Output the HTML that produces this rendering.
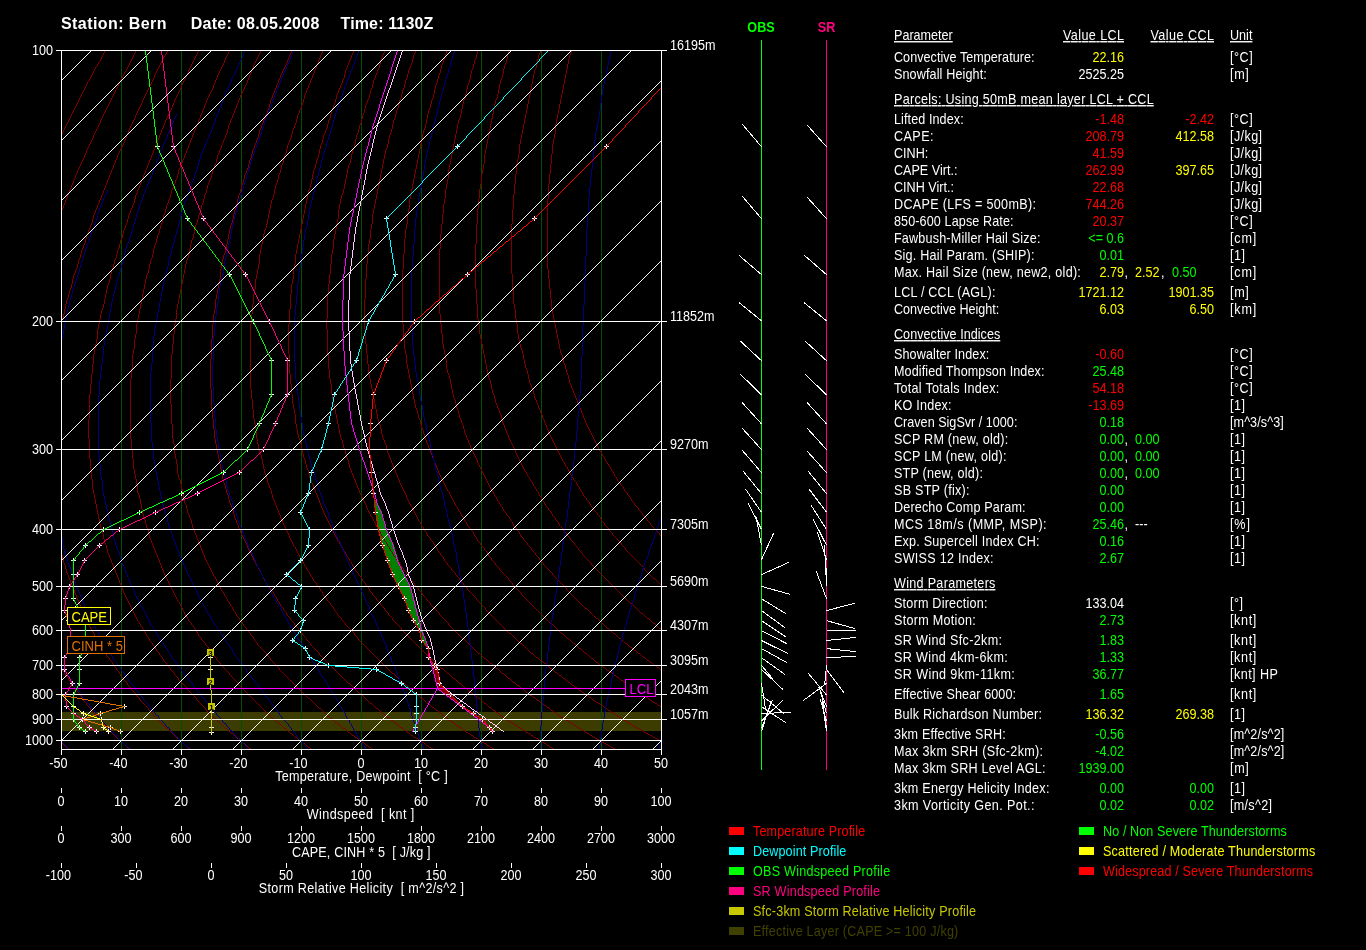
<!DOCTYPE html><html><head><meta charset="utf-8"><title>Sounding Bern 08.05.2008 1130Z</title>
<style>html,body{margin:0;padding:0;background:#000;overflow:hidden}svg{display:block;will-change:transform}text{font-family:"Liberation Sans",Arial,sans-serif;white-space:pre}</style></head><body>
<svg width="1366" height="950" viewBox="0 0 1366 950">
<defs><clipPath id="c"><rect x="62" y="51" width="599" height="698"/></clipPath></defs>
<rect width="1366" height="950" fill="#000"/>
<g shape-rendering="crispEdges" fill="none">
<g clip-path="url(#c)">
<rect x="62" y="712" width="599" height="19" fill="#3c3c00"/>
<polygon points="374.4,500.0 374.6,502.0 374.8,504.0 375.0,506.0 375.2,508.0 375.4,510.0 375.6,512.0 375.9,514.0 376.3,516.0 376.6,518.0 377.0,520.0 377.3,522.0 377.7,524.0 378.0,526.0 378.3,528.0 378.7,530.0 379.2,532.0 379.6,534.0 380.1,536.0 380.5,538.0 381.0,540.0 381.4,542.0 381.9,544.0 382.4,546.0 383.1,548.0 383.8,550.0 384.5,552.0 385.2,554.0 386.0,556.0 386.7,558.0 387.4,560.0 388.1,562.0 388.8,564.0 389.5,566.0 390.2,568.0 390.9,570.0 391.6,572.0 392.4,574.0 393.3,576.0 394.3,578.0 395.3,580.0 396.4,582.0 397.4,584.0 398.4,586.0 399.4,588.0 400.4,590.0 401.4,592.0 402.4,594.0 403.4,596.0 404.4,598.0 405.1,600.0 405.8,602.0 406.4,604.0 407.1,606.0 407.7,608.0 408.4,610.0 409.3,612.0 410.3,614.0 411.4,616.0 412.4,618.0 413.4,620.0 414.5,622.0 415.7,624.0 416.9,626.0 418.1,628.0 419.2,630.0 419.9,632.0 420.2,634.0 420.6,636.0 421.0,638.0 421.4,640.0 422.7,642.0 424.5,644.0 426.3,646.0 427.9,646.0 427.2,644.0 426.6,642.0 425.9,640.0 425.3,638.0 424.6,636.0 423.8,634.0 423.0,632.0 422.3,630.0 421.8,628.0 421.2,626.0 420.7,624.0 420.2,622.0 419.7,620.0 419.2,618.0 418.6,616.0 418.1,614.0 417.6,612.0 417.1,610.0 416.6,608.0 416.1,606.0 415.6,604.0 415.1,602.0 414.6,600.0 414.1,598.0 413.5,596.0 412.9,594.0 412.2,592.0 411.6,590.0 411.0,588.0 410.3,586.0 409.3,584.0 408.3,582.0 407.3,580.0 406.3,578.0 405.3,576.0 404.4,574.0 403.5,572.0 402.7,570.0 401.8,568.0 401.0,566.0 400.1,564.0 399.3,562.0 398.4,560.0 397.8,558.0 397.2,556.0 396.5,554.0 395.9,552.0 395.3,550.0 394.7,548.0 394.0,546.0 393.4,544.0 392.6,542.0 391.7,540.0 390.8,538.0 389.9,536.0 389.0,534.0 388.0,532.0 387.1,530.0 386.4,528.0 385.9,526.0 385.3,524.0 384.7,522.0 384.2,520.0 383.6,518.0 383.1,516.0 382.5,514.0 381.8,512.0 380.8,510.0 379.8,508.0 378.8,506.0 377.8,504.0 377.3,502.0 376.8,500.0" fill="#008000"/>
<polygon points="430.5,660.0 430.9,661.5 431.4,663.0 431.8,664.5 432.2,666.0 432.7,667.5 433.0,669.0 433.4,670.5 433.7,672.0 434.1,673.5 434.5,675.0 434.8,676.5 435.2,678.0 435.5,679.5 435.9,681.0 436.3,682.5 436.7,684.0 437.1,685.5 437.5,687.0 437.9,688.5 439.7,690.0 441.7,691.5 443.7,693.0 445.7,694.5 447.7,696.0 449.6,697.5 451.6,699.0 453.6,700.5 455.6,702.0 457.5,703.5 459.5,705.0 461.5,706.5 463.5,708.0 465.5,709.5 467.4,711.0 469.4,712.5 471.4,714.0 473.4,715.5 475.3,717.0 477.3,718.5 479.3,720.0 481.3,721.5 483.3,723.0 485.2,724.5 487.2,726.0 489.2,727.5 491.2,729.0 493.1,730.5 491.7,730.5 490.5,729.0 489.3,727.5 488.1,726.0 486.8,724.5 485.5,723.0 484.2,721.5 482.9,720.0 480.9,718.5 478.7,717.0 476.4,715.5 474.1,714.0 471.8,712.5 469.6,711.0 467.3,709.5 465.0,708.0 462.8,706.5 461.1,705.0 459.5,703.5 457.9,702.0 456.4,700.5 454.8,699.0 453.2,697.5 451.6,696.0 450.0,694.5 448.5,693.0 447.1,691.5 445.6,690.0 444.2,688.5 442.7,687.0 441.2,685.5 439.8,684.0 439.2,682.5 439.0,681.0 438.8,679.5 438.6,678.0 438.4,676.5 438.2,675.0 438.0,673.5 437.8,672.0 437.6,670.5 437.2,669.0 436.0,667.5 434.8,666.0 433.6,664.5 432.4,663.0 431.2,661.5 430.0,660.0" fill="#800000"/>
<line x1="121.5" y1="51.0" x2="121.5" y2="749.0" stroke="#005000" stroke-width="1" />
<line x1="181.5" y1="51.0" x2="181.5" y2="749.0" stroke="#005000" stroke-width="1" />
<line x1="241.5" y1="51.0" x2="241.5" y2="749.0" stroke="#005000" stroke-width="1" />
<line x1="301.5" y1="51.0" x2="301.5" y2="749.0" stroke="#005000" stroke-width="1" />
<line x1="361.5" y1="51.0" x2="361.5" y2="749.0" stroke="#005000" stroke-width="1" />
<line x1="421.5" y1="51.0" x2="421.5" y2="749.0" stroke="#005000" stroke-width="1" />
<line x1="481.5" y1="51.0" x2="481.5" y2="749.0" stroke="#005000" stroke-width="1" />
<line x1="541.5" y1="51.0" x2="541.5" y2="749.0" stroke="#005000" stroke-width="1" />
<line x1="601.5" y1="51.0" x2="601.5" y2="749.0" stroke="#005000" stroke-width="1" />
<path d="M104.5 51v2m-1 0v2m-1 0v2m-1 0v2m-1 0v2m-1 0v1m-1 0v2m-1 0v2m-1 0v1m-1 0v2m-1 0v2m-1 0v2m-1 0v2m-1 0v2m-1 0v2m-1 0v2m-1 0v1m-1 0v2m-1 0v2m-1 0v2m-1 0v2m-1 0v2m-1 0v2m-1 0v2m-1 0v2m-1 0v2m-1 0v2m-1 0v2m-1 0v2m-1 0v2m-1 0v2m-1 0v2m-1 0v2m-1 0v2m-1 0v2m-1 0v2m-1 0v2m-1 0v2m-1 0v2m-1 0v2m-1 0v2m-1 0v2m-1 0v2m0 609v1m1 0v1m1 0v1m1 0v1m1 0v1m0.5 0.5h2" stroke="#800000"/>
<path d="M135.5 51v2m-1 0v2m-1 0v2m-1 0v2m-1 0v2m-1 0v2m-1 0v2m-1 0v2m-1 0v2m-1 0v2m-1 0v1m-1 0v2m-1 0v2m-1 0v2m-1 0v2m-1 0v2m-1 0v2m-1 0v2m-1 0v2m-1 0v2m-1 0v2m-1 0v2m-1 0v2m-1 0v2m-1 0v2m-1 0v2m-1 0v2m-1 0v2m-1 0v2m-1 0v2m-1 0v2m-1 0v2m-1 0v2m-1 0v2m-1 0v2m-1 0v3m-1 0v2m-1 0v2m-1 0v2m-1 0v2m-1 0v2m-1 0v2m-1 0v3m-1 0v2m-1 0v2m-1 0v2m-1 0v2m-1 0v2m-1 0v2m-1 0v3m-1 0v2m-1 0v3m-1 0v2m-1 0v2m-1 0v2m-1 0v2m-1 0v2m-1 0v2m-1 0v3m-1 0v2m-1 0v3m-1 0v2m-1 0v3m-1 0v2m-1 0v3m-1 0v2m-1 0v3m-1 0v2m-1 0v3m-1 0v2m-1 0v3m-1 0v2m-1 0v3m-1 0v2m0 459v2m1 0v1m1 0v2m1 0v2m1 0v1m1 0v1m1 0v2m1 0v1m1 0v1m1 0v2m1 0v2m1 0v1m1 0v1m1 0v2m1 0v1m1 0v1m1 0v1m1 0v2m1 0v1m1 0v1m1 0v2m1 0v2m1 0v1m1 0v1m1 0v2m1 0v1m1 0v1m1 0v1m1 0v2m1 0v1m1 0v1m1 0v1m1 0v1m1 0v1m1 0v1m1 0v1m1 0v1m1 0v2m1 0v1m1 0v1m1 0v1m1 0v1m1 0v1m1 0v1m1 0v1m1 0v1m1 0v2m1 0v1m1 0v1m1 0v1m1 0v1m1 0v1m1 0v1m1 0v1m1 0v1m0.5 0.5h2m0.5 0.5v1m1 0v1m1 0v1m1 0v1m1 0v1m1 0v1m1 0v1m1 0v1m1 0v1m0.5 0.5h2" stroke="#800000"/>
<path d="M167.5 51v1m-1 0v2m-1 0v2m-1 0v1m-1 0v2m-1 0v2m-1 0v2m-1 0v2m-1 0v2m-1 0v2m-1 0v2m-1 0v2m-1 0v2m-1 0v3m-1 0v2m-1 0v2m-1 0v2m-1 0v2m-1 0v2m-1 0v2m-1 0v2m-1 0v2m-1 0v2m-1 0v2m-1 0v2m-1 0v3m-1 0v2m-1 0v2m-1 0v2m-1 0v2m-1 0v2m-1 0v2m-1 0v3m-1 0v2m-1 0v2m-1 0v2m-1 0v2m-1 0v2m-1 0v2m-1 0v3m-1 0v2m-1 0v3m-1 0v2m-1 0v3m-1 0v2m-1 0v2m-1 0v2m-1 0v2m-1 0v2m-1 0v2m-1 0v3m-1 0v2m-1 0v3m-1 0v2m-1 0v3m-1 0v2m-1 0v3m-1 0v2m-1 0v3m-1 0v2m-1 0v3m-1 0v2m-1 0v3m-1 0v2m-1 0v3m-1 0v2m-1 0v3m-1 0v2m-1 0v3m-1 0v2m-1 0v3m-1 0v2m-1 0v3m-1 0v2m-1 0v4m-1 0v4m-1 0v2m-1 0v3m-1 0v2m-1 0v3m-1 0v2m-1 0v4m-1 0v4m-1 0v2m-1 0v3m-1 0v2m-1 0v4m-1 0v4m-1 0v2m-1 0v4m-1 0v4m-1 0v2m-1 0v3m-1 0v2m-1 0v4m-1 0v5m-1 0v4m-1 0v2m-1 0v4m-1 0v4m-1 0v2m-1 0v4m-1 0v5m-1 0v5m-1 0v4m-1 0v2m0 235v4m1 0v4m1 0v2m1 0v4m1 0v4m1 0v2m1 0v3m1 0v2m1 0v3m1 0v2m1 0v3m1 0v2m1 0v3m1 0v2m1 0v3m1 0v2m1 0v3m1 0v2m1 0v3m1 0v2m1 0v3m1 0v2m1 0v2m1 0v2m1 0v2m1 0v2m1 0v2m1 0v2m1 0v2m1 0v2m1 0v1m1 0v2m1 0v2m1 0v1m1 0v2m1 0v2m1 0v1m1 0v2m1 0v2m1 0v1m1 0v2m1 0v2m1 0v1m1 0v2m1 0v2m1 0v1m1 0v1m1 0v2m1 0v1m1 0v1m1 0v2m1 0v2m1 0v1m1 0v1m1 0v2m1 0v1m1 0v1m1 0v2m1 0v2m1 0v1m1 0v1m1 0v2m1 0v1m1 0v1m1 0v1m1 0v2m1 0v1m1 0v1m1 0v1m1 0v2m1 0v1m1 0v1m1 0v1m1 0v2m1 0v1m1 0v1m1 0v1m1 0v2m1 0v1m1 0v1m1 0v1m1 0v1m1 0v1m1 0v1m1 0v1m1 0v1m1 0v2m1 0v1m1 0v1m1 0v1m1 0v2m1 0v1m1 0v1m1 0v1m1 0v1m1 0v1m1 0v1m1 0v1m1 0v1m1 0v1m1 0v1m1 0v1m1 0v1m1 0v1m0.5 0.5h2m0.5 0.5v1m1 0v1m1 0v1m1 0v1m1 0v1m1 0v1m1 0v1m1 0v1m1 0v1m0.5 0.5h2m0.5 0.5v1m1 0v1m1 0v1m1 0v1m1 0v1m1 0v1m1 0v1m1 0v1m0.5 0.5h2m0.5 0.5v1" stroke="#800000"/>
<path d="M198.5 51v1m-1 0v2m-1 0v2m-1 0v2m-1 0v2m-1 0v2m-1 0v2m-1 0v2m-1 0v2m-1 0v2m-1 0v3m-1 0v2m-1 0v2m-1 0v2m-1 0v2m-1 0v2m-1 0v2m-1 0v3m-1 0v2m-1 0v2m-1 0v2m-1 0v2m-1 0v2m-1 0v2m-1 0v3m-1 0v2m-1 0v3m-1 0v2m-1 0v2m-1 0v2m-1 0v2m-1 0v2m-1 0v2m-1 0v3m-1 0v2m-1 0v3m-1 0v2m-1 0v3m-1 0v2m-1 0v3m-1 0v2m-1 0v3m-1 0v2m-1 0v3m-1 0v2m-1 0v3m-1 0v2m-1 0v3m-1 0v2m-1 0v3m-1 0v2m-1 0v3m-1 0v2m-1 0v3m-1 0v2m-1 0v3m-1 0v2m-1 0v3m-1 0v2m-1 0v3m-1 0v2m-1 0v3m-1 0v2m-1 0v4m-1 0v4m-1 0v2m-1 0v3m-1 0v2m-1 0v3m-1 0v2m-1 0v4m-1 0v4m-1 0v2m-1 0v3m-1 0v2m-1 0v4m-1 0v4m-1 0v2m-1 0v4m-1 0v4m-1 0v2m-1 0v4m-1 0v4m-1 0v2m-1 0v4m-1 0v4m-1 0v2m-1 0v4m-1 0v5m-1 0v4m-1 0v2m-1 0v4m-1 0v5m-1 0v5m-1 0v5m-1 0v4m-1 0v2m-1 0v4m-1 0v5m-1 0v5m-1 0v5m-1 0v10m-1 0v5m-1 0v5m-1 0v5m-1 0v10m-1 0v10m-1 0v10m-1 0v10m-1 0v25m-1 0v20m1 0v20m1 0v10m1 0v10m1 0v10m1 0v5m1 0v5m1 0v5m1 0v5m1 0v5m1 0v5m1 0v5m1 0v4m1 0v2m1 0v4m1 0v5m1 0v4m1 0v2m1 0v4m1 0v4m1 0v2m1 0v3m1 0v2m1 0v3m1 0v2m1 0v3m1 0v2m1 0v3m1 0v2m1 0v3m1 0v2m1 0v3m1 0v2m1 0v3m1 0v2m1 0v3m1 0v2m1 0v2m1 0v2m1 0v2m1 0v2m1 0v2m1 0v2m1 0v2m1 0v2m1 0v2m1 0v2m1 0v2m1 0v2m1 0v2m1 0v1m1 0v2m1 0v2m1 0v1m1 0v2m1 0v2m1 0v1m1 0v2m1 0v2m1 0v1m1 0v2m1 0v2m1 0v1m1 0v1m1 0v2m1 0v1m1 0v1m1 0v2m1 0v2m1 0v1m1 0v1m1 0v2m1 0v1m1 0v1m1 0v2m1 0v2m1 0v1m1 0v1m1 0v2m1 0v1m1 0v1m1 0v1m1 0v2m1 0v1m1 0v1m1 0v1m1 0v2m1 0v1m1 0v1m1 0v1m1 0v2m1 0v1m1 0v1m1 0v1m1 0v1m1 0v1m1 0v1m1 0v1m1 0v1m1 0v2m1 0v1m1 0v1m1 0v1m1 0v1m1 0v1m1 0v1m1 0v1m1 0v1m1 0v2m1 0v1m1 0v1m1 0v1m1 0v1m1 0v1m1 0v1m1 0v1m1 0v1m1 0v2m1 0v1m1 0v1m1 0v1m1 0v1m1 0v1m1 0v1m1 0v1m1 0v1m0.5 0.5h2m0.5 0.5v1m1 0v1m1 0v1m1 0v1m1 0v1m1 0v1m1 0v1m1 0v1m1 0v1m0.5 0.5h2m0.5 0.5v1m1 0v1m1 0v1m1 0v1m0.5 0.5h2m0.5 0.5v1m1 0v1m1 0v1m1 0v1m0.5 0.5h2m0.5 0.5v1m1 0v1m1 0v1m1 0v1m0.5 0.5h2m0.5 0.5v1m1 0v1m1 0v1m1 0v1m0.5 0.5h2" stroke="#800000"/>
<path d="M229.5 51v1m-1 0v2m-1 0v2m-1 0v2m-1 0v2m-1 0v3m-1 0v2m-1 0v2m-1 0v2m-1 0v2m-1 0v2m-1 0v2m-1 0v3m-1 0v2m-1 0v3m-1 0v2m-1 0v3m-1 0v2m-1 0v2m-1 0v2m-1 0v2m-1 0v2m-1 0v2m-1 0v3m-1 0v2m-1 0v3m-1 0v2m-1 0v3m-1 0v2m-1 0v3m-1 0v2m-1 0v3m-1 0v2m-1 0v3m-1 0v2m-1 0v3m-1 0v2m-1 0v3m-1 0v2m-1 0v3m-1 0v2m-1 0v3m-1 0v2m-1 0v3m-1 0v2m-1 0v3m-1 0v2m-1 0v3m-1 0v2m-1 0v3m-1 0v2m-1 0v4m-1 0v4m-1 0v2m-1 0v3m-1 0v2m-1 0v3m-1 0v2m-1 0v4m-1 0v4m-1 0v2m-1 0v3m-1 0v2m-1 0v4m-1 0v4m-1 0v2m-1 0v4m-1 0v4m-1 0v2m-1 0v4m-1 0v4m-1 0v2m-1 0v4m-1 0v4m-1 0v2m-1 0v4m-1 0v5m-1 0v4m-1 0v2m-1 0v4m-1 0v5m-1 0v4m-1 0v2m-1 0v4m-1 0v5m-1 0v5m-1 0v5m-1 0v5m-1 0v5m-1 0v5m-1 0v5m-1 0v5m-1 0v5m-1 0v10m-1 0v5m-1 0v10m-1 0v5m-1 0v15m-1 0v10m-1 0v60m1 0v10m1 0v10m1 0v10m1 0v5m1 0v5m1 0v5m1 0v9m1 0v2m1 0v4m1 0v5m1 0v5m1 0v5m1 0v4m1 0v2m1 0v4m1 0v4m1 0v2m1 0v4m1 0v4m1 0v2m1 0v3m1 0v2m1 0v3m1 0v2m1 0v3m1 0v2m1 0v3m1 0v2m1 0v3m1 0v2m1 0v3m1 0v2m1 0v3m1 0v2m1 0v2m1 0v2m1 0v2m1 0v2m1 0v2m1 0v2m1 0v2m1 0v2m1 0v2m1 0v2m1 0v2m1 0v2m1 0v2m1 0v1m1 0v2m1 0v2m1 0v2m1 0v2m1 0v2m1 0v2m1 0v2m1 0v1m1 0v2m1 0v2m1 0v1m1 0v1m1 0v2m1 0v1m1 0v1m1 0v2m1 0v2m1 0v1m1 0v2m1 0v2m1 0v1m1 0v1m1 0v2m1 0v1m1 0v1m1 0v1m1 0v2m1 0v1m1 0v1m1 0v2m1 0v2m1 0v1m1 0v1m1 0v2m1 0v1m1 0v1m1 0v1m1 0v2m1 0v1m1 0v1m1 0v1m1 0v2m1 0v1m1 0v1m1 0v1m1 0v1m1 0v1m1 0v1m1 0v1m1 0v1m1 0v2m1 0v1m1 0v1m1 0v1m1 0v1m1 0v1m1 0v1m1 0v1m1 0v1m1 0v2m1 0v1m1 0v1m1 0v1m1 0v1m1 0v1m1 0v1m1 0v1m1 0v1m1 0v1m1 0v1m1 0v1m1 0v1m1 0v1m1 0v1m1 0v1m1 0v1m1 0v1m1 0v1m1 0v1m1 0v1m1 0v1m1 0v1m1 0v1m1 0v1m1 0v1m1 0v1m1 0v1m1 0v1m1 0v1m1 0v1m1 0v1m1 0v1m1 0v1m0.5 0.5h2m0.5 0.5v1m1 0v1m1 0v1m1 0v1m0.5 0.5h2m0.5 0.5v1m1 0v1m1 0v1m1 0v1m0.5 0.5h2m0.5 0.5v1m1 0v1m1 0v1m1 0v1m0.5 0.5h2m0.5 0.5v1m1 0v1m1 0v1m0.5 0.5h2m0.5 0.5v1m1 0v1m0.5 0.5h2m0.5 0.5v1m1 0v1m0.5 0.5h2m0.5 0.5v1m1 0v1m1 0v1m0.5 0.5h2m0.5 0.5v1" stroke="#800000"/>
<path d="M260.5 51v2m-1 0v2m-1 0v2m-1 0v2m-1 0v2m-1 0v2m-1 0v2m-1 0v3m-1 0v2m-1 0v3m-1 0v2m-1 0v3m-1 0v2m-1 0v3m-1 0v2m-1 0v2m-1 0v2m-1 0v2m-1 0v2m-1 0v2m-1 0v3m-1 0v2m-1 0v3m-1 0v2m-1 0v3m-1 0v2m-1 0v3m-1 0v2m-1 0v3m-1 0v2m-1 0v3m-1 0v2m-1 0v4m-1 0v4m-1 0v2m-1 0v3m-1 0v2m-1 0v3m-1 0v2m-1 0v3m-1 0v2m-1 0v3m-1 0v2m-1 0v4m-1 0v4m-1 0v2m-1 0v3m-1 0v2m-1 0v4m-1 0v4m-1 0v2m-1 0v3m-1 0v2m-1 0v4m-1 0v4m-1 0v2m-1 0v4m-1 0v4m-1 0v2m-1 0v4m-1 0v4m-1 0v2m-1 0v4m-1 0v4m-1 0v2m-1 0v4m-1 0v5m-1 0v4m-1 0v2m-1 0v4m-1 0v5m-1 0v5m-1 0v4m-1 0v2m-1 0v4m-1 0v5m-1 0v5m-1 0v5m-1 0v5m-1 0v5m-1 0v5m-1 0v5m-1 0v5m-1 0v5m-1 0v10m-1 0v5m-1 0v10m-1 0v10m-1 0v10m-1 0v25m-1 0v25m1 0v20m1 0v15m1 0v5m1 0v10m1 0v5m1 0v5m1 0v10m1 0v4m1 0v2m1 0v4m1 0v5m1 0v5m1 0v5m1 0v4m1 0v2m1 0v4m1 0v4m1 0v2m1 0v3m1 0v2m1 0v4m1 0v4m1 0v2m1 0v3m1 0v2m1 0v3m1 0v2m1 0v3m1 0v2m1 0v3m1 0v2m1 0v3m1 0v2m1 0v3m1 0v2m1 0v2m1 0v2m1 0v2m1 0v2m1 0v2m1 0v2m1 0v2m1 0v2m1 0v1m1 0v2m1 0v2m1 0v2m1 0v2m1 0v2m1 0v2m1 0v2m1 0v1m1 0v2m1 0v2m1 0v1m1 0v2m1 0v2m1 0v1m1 0v2m1 0v2m1 0v1m1 0v2m1 0v2m1 0v1m1 0v2m1 0v2m1 0v1m1 0v1m1 0v2m1 0v1m1 0v1m1 0v2m1 0v2m1 0v1m1 0v1m1 0v2m1 0v1m1 0v1m1 0v1m1 0v2m1 0v1m1 0v1m1 0v2m1 0v2m1 0v1m1 0v1m1 0v2m1 0v1m1 0v1m1 0v1m1 0v1m1 0v1m1 0v1m1 0v1m1 0v1m1 0v2m1 0v1m1 0v1m1 0v1m1 0v2m1 0v1m1 0v1m1 0v1m1 0v1m1 0v1m1 0v1m1 0v1m1 0v1m1 0v2m1 0v1m1 0v1m1 0v1m1 0v1m1 0v1m1 0v1m1 0v1m1 0v1m1 0v1m1 0v1m1 0v1m1 0v1m1 0v1m1 0v1m1 0v1m1 0v1m1 0v1m1 0v1m1 0v1m1 0v1m1 0v1m1 0v1m1 0v1m1 0v1m1 0v1m1 0v1m1 0v1m1 0v1m0.5 0.5h2m0.5 0.5v1m1 0v1m1 0v1m1 0v1m1 0v1m1 0v1m1 0v1m1 0v1m1 0v1m0.5 0.5h2m0.5 0.5v1m1 0v1m1 0v1m1 0v1m1 0v1m1 0v1m1 0v1m1 0v1m1 0v1m0.5 0.5h2m0.5 0.5v1m1 0v1m1 0v1m0.5 0.5h2m0.5 0.5v1m1 0v1m0.5 0.5h2m0.5 0.5v1m1 0v1m0.5 0.5h2m0.5 0.5v1m1 0v1m1 0v1m0.5 0.5h2m0.5 0.5v1m1 0v1m0.5 0.5h2m0.5 0.5v1m0.5 0.5h2m0.5 0.5v1m1 0v1m0.5 0.5h2m0.5 0.5v1m0.5 0.5h2m0.5 0.5v1m1 0v1m0.5 0.5h2m0.5 0.5v1m0.5 0.5h2m0.5 0.5v1" stroke="#800000"/>
<path d="M291.5 51v2m-1 0v2m-1 0v3m-1 0v2m-1 0v3m-1 0v2m-1 0v2m-1 0v2m-1 0v2m-1 0v2m-1 0v2m-1 0v3m-1 0v2m-1 0v3m-1 0v2m-1 0v3m-1 0v2m-1 0v3m-1 0v2m-1 0v3m-1 0v2m-1 0v4m-1 0v4m-1 0v2m-1 0v3m-1 0v2m-1 0v3m-1 0v2m-1 0v3m-1 0v2m-1 0v3m-1 0v2m-1 0v4m-1 0v4m-1 0v2m-1 0v3m-1 0v2m-1 0v3m-1 0v2m-1 0v4m-1 0v4m-1 0v2m-1 0v4m-1 0v4m-1 0v2m-1 0v3m-1 0v2m-1 0v4m-1 0v4m-1 0v2m-1 0v4m-1 0v4m-1 0v2m-1 0v4m-1 0v5m-1 0v4m-1 0v2m-1 0v4m-1 0v5m-1 0v4m-1 0v2m-1 0v4m-1 0v5m-1 0v5m-1 0v5m-1 0v5m-1 0v4m-1 0v2m-1 0v4m-1 0v5m-1 0v5m-1 0v10m-1 0v5m-1 0v5m-1 0v5m-1 0v5m-1 0v10m-1 0v5m-1 0v10m-1 0v15m-1 0v20m-1 0v30m1 0v20m1 0v10m1 0v10m1 0v10m1 0v5m1 0v5m1 0v5m1 0v5m1 0v5m1 0v5m1 0v5m1 0v5m1 0v4m1 0v2m1 0v4m1 0v4m1 0v2m1 0v4m1 0v4m1 0v2m1 0v3m1 0v2m1 0v4m1 0v4m1 0v2m1 0v3m1 0v2m1 0v3m1 0v2m1 0v3m1 0v2m1 0v2m1 0v2m1 0v2m1 0v2m1 0v2m1 0v3m1 0v2m1 0v2m1 0v2m1 0v2m1 0v2m1 0v2m1 0v2m1 0v2m1 0v2m1 0v1m1 0v2m1 0v2m1 0v2m1 0v2m1 0v2m1 0v2m1 0v2m1 0v1m1 0v2m1 0v2m1 0v1m1 0v1m1 0v2m1 0v1m1 0v1m1 0v2m1 0v2m1 0v1m1 0v2m1 0v2m1 0v1m1 0v2m1 0v2m1 0v1m1 0v1m1 0v2m1 0v1m1 0v1m1 0v2m1 0v2m1 0v1m1 0v1m1 0v2m1 0v1m1 0v1m1 0v1m1 0v2m1 0v1m1 0v1m1 0v1m1 0v2m1 0v1m1 0v1m1 0v1m1 0v2m1 0v1m1 0v1m1 0v1m1 0v2m1 0v1m1 0v1m1 0v1m1 0v2m1 0v1m1 0v1m1 0v1m1 0v1m1 0v1m1 0v1m1 0v1m1 0v1m1 0v2m1 0v1m1 0v1m1 0v1m1 0v1m1 0v1m1 0v1m1 0v1m1 0v1m1 0v1m1 0v1m1 0v1m1 0v1m1 0v1m1 0v1m1 0v1m1 0v1m1 0v1m1 0v1m1 0v1m1 0v1m1 0v1m1 0v1m1 0v1m1 0v1m1 0v1m1 0v1m1 0v1m1 0v1m0.5 0.5h2m0.5 0.5v1m1 0v1m1 0v1m1 0v1m1 0v1m1 0v1m1 0v1m1 0v1m1 0v1m0.5 0.5h2m0.5 0.5v1m1 0v1m1 0v1m1 0v1m1 0v1m1 0v1m1 0v1m1 0v1m1 0v1m0.5 0.5h2m0.5 0.5v1m1 0v1m1 0v1m1 0v1m0.5 0.5h2m0.5 0.5v1m1 0v1m1 0v1m1 0v1m0.5 0.5h2m0.5 0.5v1m1 0v1m1 0v1m0.5 0.5h2m0.5 0.5v1m1 0v1m0.5 0.5h2m0.5 0.5v1m1 0v1m0.5 0.5h2m0.5 0.5v1m1 0v1m1 0v1m0.5 0.5h2m0.5 0.5v1m1 0v1m0.5 0.5h2m0.5 0.5v1m0.5 0.5h2m0.5 0.5v1m1 0v1m0.5 0.5h2m0.5 0.5v1m0.5 0.5h2m0 1h2m0.5 0.5v1m0.5 0.5h2m0.5 0.5v1m0.5 0.5h2m0.5 0.5v1m1 0v1m0.5 0.5h2m0.5 0.5v1m0.5 0.5h2m0 1h2" stroke="#800000"/>
<path d="M322.5 51v2m-1 0v2m-1 0v3m-1 0v2m-1 0v3m-1 0v2m-1 0v3m-1 0v2m-1 0v3m-1 0v2m-1 0v3m-1 0v2m-1 0v3m-1 0v2m-1 0v3m-1 0v2m-1 0v3m-1 0v2m-1 0v4m-1 0v4m-1 0v2m-1 0v3m-1 0v2m-1 0v3m-1 0v2m-1 0v4m-1 0v4m-1 0v2m-1 0v3m-1 0v2m-1 0v4m-1 0v4m-1 0v2m-1 0v3m-1 0v2m-1 0v4m-1 0v4m-1 0v2m-1 0v4m-1 0v4m-1 0v2m-1 0v4m-1 0v4m-1 0v2m-1 0v4m-1 0v4m-1 0v2m-1 0v4m-1 0v5m-1 0v4m-1 0v2m-1 0v4m-1 0v5m-1 0v5m-1 0v5m-1 0v5m-1 0v4m-1 0v2m-1 0v4m-1 0v5m-1 0v5m-1 0v5m-1 0v5m-1 0v10m-1 0v5m-1 0v5m-1 0v5m-1 0v10m-1 0v5m-1 0v10m-1 0v10m-1 0v10m-1 0v65m1 0v10m1 0v10m1 0v10m1 0v5m1 0v5m1 0v10m1 0v5m1 0v5m1 0v4m1 0v2m1 0v4m1 0v5m1 0v5m1 0v4m1 0v2m1 0v4m1 0v4m1 0v2m1 0v3m1 0v2m1 0v4m1 0v4m1 0v2m1 0v3m1 0v2m1 0v3m1 0v2m1 0v3m1 0v2m1 0v3m1 0v2m1 0v3m1 0v2m1 0v2m1 0v2m1 0v2m1 0v2m1 0v2m1 0v3m1 0v2m1 0v2m1 0v2m1 0v2m1 0v1m1 0v2m1 0v2m1 0v2m1 0v2m1 0v2m1 0v2m1 0v2m1 0v1m1 0v2m1 0v2m1 0v1m1 0v2m1 0v2m1 0v1m1 0v2m1 0v2m1 0v1m1 0v2m1 0v2m1 0v1m1 0v1m1 0v2m1 0v1m1 0v1m1 0v2m1 0v2m1 0v1m1 0v2m1 0v2m1 0v1m1 0v1m1 0v2m1 0v1m1 0v1m1 0v1m1 0v2m1 0v1m1 0v1m1 0v2m1 0v2m1 0v1m1 0v1m1 0v2m1 0v1m1 0v1m1 0v1m1 0v2m1 0v1m1 0v1m1 0v1m1 0v2m1 0v1m1 0v1m1 0v1m1 0v1m1 0v1m1 0v1m1 0v1m1 0v1m1 0v2m1 0v1m1 0v1m1 0v1m1 0v2m1 0v1m1 0v1m1 0v1m1 0v1m1 0v1m1 0v1m1 0v1m1 0v1m1 0v1m1 0v1m1 0v1m1 0v1m1 0v1m1 0v1m1 0v1m1 0v1m1 0v1m1 0v1m1 0v1m1 0v1m1 0v1m1 0v1m1 0v1m1 0v1m1 0v1m1 0v1m1 0v1m1 0v1m1 0v1m1 0v1m1 0v1m1 0v1m1 0v1m0.5 0.5h2m0.5 0.5v1m1 0v1m1 0v1m1 0v1m1 0v1m1 0v1m1 0v1m1 0v1m1 0v1m0.5 0.5h2m0.5 0.5v1m1 0v1m1 0v1m1 0v1m0.5 0.5h2m0.5 0.5v1m1 0v1m1 0v1m1 0v1m0.5 0.5h2m0.5 0.5v1m1 0v1m1 0v1m1 0v1m0.5 0.5h2m0.5 0.5v1m1 0v1m1 0v1m1 0v1m0.5 0.5h2m0.5 0.5v1m1 0v1m1 0v1m0.5 0.5h2m0.5 0.5v1m1 0v1m0.5 0.5h2m0.5 0.5v1m1 0v1m0.5 0.5h2m0.5 0.5v1m1 0v1m1 0v1m0.5 0.5h2m0.5 0.5v1m1 0v1m0.5 0.5h2m0.5 0.5v1m0.5 0.5h2m0.5 0.5v1m1 0v1m0.5 0.5h2m0.5 0.5v1m0.5 0.5h2m0.5 0.5v1m1 0v1m0.5 0.5h2m0.5 0.5v1m0.5 0.5h2m0 1h2m0.5 0.5v1m0.5 0.5h2m0.5 0.5v1m0.5 0.5h2m0 1h2m0.5 0.5v1m0.5 0.5h2m0.5 0.5v1m0.5 0.5h2m0 1h2m0.5 0.5v1m0.5 0.5h2m0.5 0.5v1m0.5 0.5h2m0 1h2" stroke="#800000"/>
<path d="M353.5 51v2m-1 0v2m-1 0v3m-1 0v2m-1 0v3m-1 0v2m-1 0v3m-1 0v2m-1 0v4m-1 0v4m-1 0v2m-1 0v3m-1 0v2m-1 0v3m-1 0v2m-1 0v3m-1 0v2m-1 0v4m-1 0v4m-1 0v2m-1 0v3m-1 0v2m-1 0v4m-1 0v4m-1 0v2m-1 0v4m-1 0v4m-1 0v2m-1 0v3m-1 0v2m-1 0v4m-1 0v4m-1 0v2m-1 0v4m-1 0v5m-1 0v4m-1 0v2m-1 0v4m-1 0v4m-1 0v2m-1 0v4m-1 0v5m-1 0v5m-1 0v4m-1 0v2m-1 0v4m-1 0v5m-1 0v5m-1 0v5m-1 0v5m-1 0v5m-1 0v5m-1 0v5m-1 0v5m-1 0v5m-1 0v5m-1 0v5m-1 0v5m-1 0v10m-1 0v5m-1 0v10m-1 0v5m-1 0v10m-1 0v15m-1 0v15m-1 0v30m1 0v20m1 0v10m1 0v10m1 0v10m1 0v5m1 0v5m1 0v10m1 0v5m1 0v5m1 0v4m1 0v2m1 0v4m1 0v5m1 0v5m1 0v4m1 0v2m1 0v4m1 0v4m1 0v2m1 0v4m1 0v4m1 0v2m1 0v3m1 0v2m1 0v3m1 0v2m1 0v3m1 0v2m1 0v3m1 0v2m1 0v3m1 0v2m1 0v3m1 0v2m1 0v3m1 0v2m1 0v2m1 0v2m1 0v2m1 0v2m1 0v2m1 0v2m1 0v2m1 0v2m1 0v2m1 0v2m1 0v2m1 0v2m1 0v2m1 0v1m1 0v2m1 0v2m1 0v1m1 0v2m1 0v2m1 0v1m1 0v2m1 0v2m1 0v1m1 0v2m1 0v2m1 0v1m1 0v2m1 0v2m1 0v1m1 0v2m1 0v2m1 0v1m1 0v1m1 0v2m1 0v1m1 0v1m1 0v2m1 0v2m1 0v1m1 0v1m1 0v2m1 0v1m1 0v1m1 0v2m1 0v2m1 0v1m1 0v1m1 0v2m1 0v1m1 0v1m1 0v1m1 0v2m1 0v1m1 0v1m1 0v1m1 0v2m1 0v1m1 0v1m1 0v1m1 0v2m1 0v1m1 0v1m1 0v1m1 0v2m1 0v1m1 0v1m1 0v1m1 0v2m1 0v1m1 0v1m1 0v1m1 0v1m1 0v1m1 0v1m1 0v1m1 0v1m1 0v2m1 0v1m1 0v1m1 0v1m1 0v1m1 0v1m1 0v1m1 0v1m1 0v1m1 0v1m1 0v1m1 0v1m1 0v1m1 0v1m1 0v1m1 0v1m1 0v1m1 0v1m1 0v1m1 0v1m1 0v1m1 0v1m1 0v1m1 0v1m1 0v1m1 0v1m1 0v1m1 0v1m1 0v1m0.5 0.5h2m0.5 0.5v1m1 0v1m1 0v1m1 0v1m1 0v1m1 0v1m1 0v1m1 0v1m1 0v1m0.5 0.5h2m0.5 0.5v1m1 0v1m1 0v1m1 0v1m0.5 0.5h2m0.5 0.5v1m1 0v1m1 0v1m1 0v1m0.5 0.5h2m0.5 0.5v1m1 0v1m1 0v1m1 0v1m0.5 0.5h2m0.5 0.5v1m1 0v1m1 0v1m1 0v1m0.5 0.5h2m0.5 0.5v1m1 0v1m1 0v1m0.5 0.5h2m0.5 0.5v1m1 0v1m0.5 0.5h2m0.5 0.5v1m1 0v1m0.5 0.5h2m0.5 0.5v1m1 0v1m1 0v1m1 0v1m0.5 0.5h2m0.5 0.5v1m1 0v1m1 0v1m0.5 0.5h2m0.5 0.5v1m1 0v1m0.5 0.5h2m0.5 0.5v1m0.5 0.5h2m0.5 0.5v1m1 0v1m0.5 0.5h2m0.5 0.5v1m0.5 0.5h2m0.5 0.5v1m1 0v1m0.5 0.5h2m0.5 0.5v1m0.5 0.5h2m0 1h2m0.5 0.5v1m0.5 0.5h2m0.5 0.5v1m0.5 0.5h2m0 1h2m0.5 0.5v1m0.5 0.5h2m0.5 0.5v1m0.5 0.5h2m0 1h2m0.5 0.5v1m0.5 0.5h2m0.5 0.5v1m0.5 0.5h2m0 1h2m0.5 0.5v1m0.5 0.5h2m0.5 0.5v1m0.5 0.5h2m0 1h2m0.5 0.5v1m0.5 0.5h2m0.5 0.5v1m0.5 0.5h2m0 1h2" stroke="#800000"/>
<path d="M384.5 51v2m-1 0v2m-1 0v3m-1 0v2m-1 0v4m-1 0v4m-1 0v2m-1 0v3m-1 0v2m-1 0v3m-1 0v2m-1 0v4m-1 0v4m-1 0v2m-1 0v4m-1 0v4m-1 0v2m-1 0v3m-1 0v2m-1 0v4m-1 0v4m-1 0v2m-1 0v4m-1 0v4m-1 0v2m-1 0v4m-1 0v4m-1 0v2m-1 0v4m-1 0v5m-1 0v4m-1 0v2m-1 0v4m-1 0v5m-1 0v4m-1 0v2m-1 0v4m-1 0v5m-1 0v5m-1 0v5m-1 0v5m-1 0v4m-1 0v2m-1 0v4m-1 0v5m-1 0v5m-1 0v10m-1 0v5m-1 0v5m-1 0v5m-1 0v5m-1 0v10m-1 0v5m-1 0v10m-1 0v10m-1 0v10m-1 0v10m-1 0v25m-1 0v10m1 0v25m1 0v15m1 0v10m1 0v5m1 0v10m1 0v5m1 0v5m1 0v5m1 0v5m1 0v5m1 0v5m1 0v5m1 0v5m1 0v4m1 0v2m1 0v4m1 0v4m1 0v2m1 0v4m1 0v4m1 0v2m1 0v4m1 0v4m1 0v2m1 0v3m1 0v2m1 0v3m1 0v2m1 0v3m1 0v2m1 0v3m1 0v2m1 0v3m1 0v2m1 0v2m1 0v2m1 0v2m1 0v2m1 0v2m1 0v3m1 0v2m1 0v2m1 0v2m1 0v2m1 0v1m1 0v2m1 0v2m1 0v2m1 0v2m1 0v2m1 0v2m1 0v2m1 0v1m1 0v2m1 0v2m1 0v1m1 0v2m1 0v2m1 0v1m1 0v2m1 0v2m1 0v1m1 0v2m1 0v2m1 0v1m1 0v2m1 0v2m1 0v1m1 0v1m1 0v2m1 0v1m1 0v1m1 0v2m1 0v2m1 0v1m1 0v1m1 0v2m1 0v1m1 0v1m1 0v2m1 0v2m1 0v1m1 0v1m1 0v2m1 0v1m1 0v1m1 0v1m1 0v2m1 0v1m1 0v1m1 0v1m1 0v2m1 0v1m1 0v1m1 0v1m1 0v2m1 0v1m1 0v1m1 0v1m1 0v2m1 0v1m1 0v1m1 0v1m1 0v2m1 0v1m1 0v1m1 0v1m1 0v1m1 0v1m1 0v1m1 0v1m1 0v1m1 0v2m1 0v1m1 0v1m1 0v1m1 0v1m1 0v1m1 0v1m1 0v1m1 0v1m1 0v2m1 0v1m1 0v1m1 0v1m1 0v1m1 0v1m1 0v1m1 0v1m1 0v1m1 0v1m1 0v1m1 0v1m1 0v1m1 0v1m0.5 0.5h2m0.5 0.5v1m1 0v1m1 0v1m1 0v1m1 0v1m1 0v1m1 0v1m1 0v1m1 0v1m1 0v1m1 0v1m1 0v1m1 0v1m1 0v1m0.5 0.5h2m0.5 0.5v1m1 0v1m1 0v1m1 0v1m0.5 0.5h2m0.5 0.5v1m1 0v1m1 0v1m1 0v1m0.5 0.5h2m0.5 0.5v1m1 0v1m1 0v1m1 0v1m0.5 0.5h2m0.5 0.5v1m1 0v1m1 0v1m1 0v1m0.5 0.5h2m0.5 0.5v1m1 0v1m1 0v1m1 0v1m0.5 0.5h2m0.5 0.5v1m1 0v1m1 0v1m0.5 0.5h2m0.5 0.5v1m1 0v1m0.5 0.5h2m0.5 0.5v1m1 0v1m0.5 0.5h2m0.5 0.5v1m1 0v1m1 0v1m0.5 0.5h2m0.5 0.5v1m1 0v1m0.5 0.5h2m0.5 0.5v1m0.5 0.5h2m0.5 0.5v1m1 0v1m0.5 0.5h2m0.5 0.5v1m0.5 0.5h2m0.5 0.5v1m1 0v1m0.5 0.5h2m0.5 0.5v1m0.5 0.5h2m0.5 0.5v1m1 0v1m0.5 0.5h2m0.5 0.5v1m0.5 0.5h2m0.5 0.5v1m1 0v1m0.5 0.5h2m0.5 0.5v1m0.5 0.5h2m0 1h2m0.5 0.5v1m0.5 0.5h2m0.5 0.5v1m0.5 0.5h2m0 1h2m0.5 0.5v1m0.5 0.5h2m0.5 0.5v1m0.5 0.5h2m0 1h2m0.5 0.5v1m0.5 0.5h2m0.5 0.5v1m0.5 0.5h2m0 1h2m0.5 0.5v1m0.5 0.5h2m0.5 0.5v1m0.5 0.5h2m0 1h2m0 1h2m0 1h2m0.5 0.5v1m0.5 0.5h2m0 1h2m0 1h2m0 1h2m0.5 0.5v1m0.5 0.5h2m0 1h2" stroke="#800000"/>
<path d="M415.5 51v2m-1 0v2m-1 0v4m-1 0v4m-1 0v2m-1 0v3m-1 0v2m-1 0v4m-1 0v4m-1 0v2m-1 0v4m-1 0v4m-1 0v2m-1 0v4m-1 0v4m-1 0v2m-1 0v4m-1 0v4m-1 0v2m-1 0v4m-1 0v4m-1 0v2m-1 0v4m-1 0v5m-1 0v4m-1 0v2m-1 0v4m-1 0v5m-1 0v4m-1 0v2m-1 0v4m-1 0v5m-1 0v5m-1 0v5m-1 0v5m-1 0v5m-1 0v5m-1 0v5m-1 0v5m-1 0v5m-1 0v5m-1 0v5m-1 0v5m-1 0v10m-1 0v5m-1 0v10m-1 0v5m-1 0v10m-1 0v10m-1 0v15m-1 0v20m-1 0v30m1 0v15m1 0v10m1 0v10m1 0v10m1 0v5m1 0v5m1 0v5m1 0v5m1 0v5m1 0v5m1 0v5m1 0v5m1 0v5m1 0v4m1 0v2m1 0v4m1 0v5m1 0v4m1 0v2m1 0v3m1 0v2m1 0v4m1 0v4m1 0v2m1 0v3m1 0v2m1 0v3m1 0v2m1 0v3m1 0v2m1 0v3m1 0v2m1 0v3m1 0v2m1 0v3m1 0v2m1 0v2m1 0v2m1 0v2m1 0v2m1 0v2m1 0v3m1 0v2m1 0v2m1 0v2m1 0v2m1 0v1m1 0v2m1 0v2m1 0v2m1 0v2m1 0v2m1 0v2m1 0v2m1 0v1m1 0v2m1 0v2m1 0v1m1 0v2m1 0v2m1 0v1m1 0v2m1 0v2m1 0v1m1 0v1m1 0v2m1 0v1m1 0v1m1 0v2m1 0v2m1 0v1m1 0v2m1 0v2m1 0v1m1 0v1m1 0v2m1 0v1m1 0v1m1 0v2m1 0v2m1 0v1m1 0v1m1 0v2m1 0v1m1 0v1m1 0v1m1 0v2m1 0v1m1 0v1m1 0v1m1 0v2m1 0v1m1 0v1m1 0v1m1 0v2m1 0v1m1 0v1m1 0v1m1 0v2m1 0v1m1 0v1m1 0v1m1 0v2m1 0v1m1 0v1m1 0v1m1 0v1m1 0v1m1 0v1m1 0v1m1 0v1m1 0v2m1 0v1m1 0v1m1 0v1m1 0v1m1 0v1m1 0v1m1 0v1m1 0v1m1 0v2m1 0v1m1 0v1m1 0v1m1 0v1m1 0v1m1 0v1m1 0v1m1 0v1m1 0v1m1 0v1m1 0v1m1 0v1m1 0v1m1 0v1m1 0v1m1 0v1m1 0v1m1 0v1m1 0v1m1 0v1m1 0v1m1 0v1m1 0v1m0.5 0.5h2m0.5 0.5v1m1 0v1m1 0v1m1 0v1m1 0v1m1 0v1m1 0v1m1 0v1m1 0v1m0.5 0.5h2m0.5 0.5v1m1 0v1m1 0v1m1 0v1m1 0v1m1 0v1m1 0v1m1 0v1m1 0v1m0.5 0.5h2m0.5 0.5v1m1 0v1m1 0v1m0.5 0.5h2m0.5 0.5v1m1 0v1m0.5 0.5h2m0.5 0.5v1m1 0v1m0.5 0.5h2m0.5 0.5v1m1 0v1m1 0v1m1 0v1m0.5 0.5h2m0.5 0.5v1m1 0v1m1 0v1m0.5 0.5h2m0.5 0.5v1m1 0v1m0.5 0.5h2m0.5 0.5v1m1 0v1m0.5 0.5h2m0.5 0.5v1m1 0v1m1 0v1m0.5 0.5h2m0.5 0.5v1m1 0v1m0.5 0.5h2m0.5 0.5v1m0.5 0.5h2m0.5 0.5v1m1 0v1m0.5 0.5h2m0.5 0.5v1m0.5 0.5h2m0.5 0.5v1m1 0v1m0.5 0.5h2m0.5 0.5v1m0.5 0.5h2m0.5 0.5v1m1 0v1m0.5 0.5h2m0.5 0.5v1m0.5 0.5h2m0 1h2m0.5 0.5v1m0.5 0.5h2m0.5 0.5v1m0.5 0.5h2m0.5 0.5v1m1 0v1m0.5 0.5h2m0.5 0.5v1m0.5 0.5h2m0 1h2m0.5 0.5v1m0.5 0.5h2m0.5 0.5v1m0.5 0.5h2m0 1h2m0.5 0.5v1m0.5 0.5h2m0.5 0.5v1m0.5 0.5h2m0 1h2m0.5 0.5v1m0.5 0.5h2m0.5 0.5v1m0.5 0.5h2m0 1h2m0 1h2m0 1h2m0.5 0.5v1m0.5 0.5h2m0 1h2m0 1h2m0 1h2m0.5 0.5v1m0.5 0.5h2m0 1h2m0 1h2m0 1h2" stroke="#800000"/>
<path d="M446.5 51v3m-1 0v4m-1 0v2m-1 0v3m-1 0v2m-1 0v4m-1 0v4m-1 0v2m-1 0v4m-1 0v4m-1 0v2m-1 0v4m-1 0v5m-1 0v4m-1 0v2m-1 0v4m-1 0v4m-1 0v2m-1 0v4m-1 0v5m-1 0v5m-1 0v4m-1 0v2m-1 0v4m-1 0v5m-1 0v5m-1 0v5m-1 0v5m-1 0v5m-1 0v5m-1 0v5m-1 0v5m-1 0v5m-1 0v5m-1 0v5m-1 0v5m-1 0v5m-1 0v10m-1 0v5m-1 0v10m-1 0v5m-1 0v10m-1 0v15m-1 0v15m-1 0v55m1 0v15m1 0v10m1 0v5m1 0v10m1 0v5m1 0v5m1 0v5m1 0v5m1 0v5m1 0v5m1 0v5m1 0v5m1 0v4m1 0v2m1 0v4m1 0v4m1 0v2m1 0v4m1 0v4m1 0v2m1 0v4m1 0v4m1 0v2m1 0v3m1 0v2m1 0v3m1 0v2m1 0v3m1 0v2m1 0v3m1 0v2m1 0v3m1 0v2m1 0v3m1 0v2m1 0v3m1 0v2m1 0v2m1 0v2m1 0v2m1 0v2m1 0v2m1 0v2m1 0v2m1 0v2m1 0v1m1 0v2m1 0v2m1 0v2m1 0v2m1 0v2m1 0v2m1 0v2m1 0v1m1 0v2m1 0v2m1 0v1m1 0v2m1 0v2m1 0v1m1 0v2m1 0v2m1 0v1m1 0v2m1 0v2m1 0v1m1 0v1m1 0v2m1 0v1m1 0v1m1 0v2m1 0v2m1 0v1m1 0v2m1 0v2m1 0v1m1 0v1m1 0v2m1 0v1m1 0v1m1 0v1m1 0v2m1 0v1m1 0v1m1 0v2m1 0v2m1 0v1m1 0v1m1 0v2m1 0v1m1 0v1m1 0v1m1 0v2m1 0v1m1 0v1m1 0v1m1 0v2m1 0v1m1 0v1m1 0v1m1 0v1m1 0v1m1 0v1m1 0v1m1 0v1m1 0v2m1 0v1m1 0v1m1 0v1m1 0v2m1 0v1m1 0v1m1 0v1m1 0v1m1 0v1m1 0v1m1 0v1m1 0v1m1 0v2m1 0v1m1 0v1m1 0v1m1 0v1m1 0v1m1 0v1m1 0v1m1 0v1m1 0v1m1 0v1m1 0v1m1 0v1m1 0v1m1 0v1m1 0v1m1 0v1m1 0v1m1 0v1m1 0v1m1 0v1m1 0v1m1 0v1m1 0v1m1 0v1m1 0v1m1 0v1m1 0v1m1 0v1m0.5 0.5h2m0.5 0.5v1m1 0v1m1 0v1m1 0v1m1 0v1m1 0v1m1 0v1m1 0v1m1 0v1m0.5 0.5h2m0.5 0.5v1m1 0v1m1 0v1m1 0v1m0.5 0.5h2m0.5 0.5v1m1 0v1m1 0v1m1 0v1m0.5 0.5h2m0.5 0.5v1m1 0v1m1 0v1m1 0v1m0.5 0.5h2m0.5 0.5v1m1 0v1m1 0v1m1 0v1m0.5 0.5h2m0.5 0.5v1m1 0v1m1 0v1m1 0v1m0.5 0.5h2m0.5 0.5v1m1 0v1m1 0v1m0.5 0.5h2m0.5 0.5v1m1 0v1m0.5 0.5h2m0.5 0.5v1m0.5 0.5h2m0.5 0.5v1m1 0v1m0.5 0.5h2m0.5 0.5v1m0.5 0.5h2m0.5 0.5v1m1 0v1m0.5 0.5h2m0.5 0.5v1m0.5 0.5h2m0.5 0.5v1m1 0v1m0.5 0.5h2m0.5 0.5v1m0.5 0.5h2m0.5 0.5v1m1 0v1m0.5 0.5h2m0.5 0.5v1m0.5 0.5h2m0.5 0.5v1m1 0v1m0.5 0.5h2m0.5 0.5v1m0.5 0.5h2m0 1h2m0.5 0.5v1m0.5 0.5h2m0.5 0.5v1m0.5 0.5h2m0.5 0.5v1m1 0v1m0.5 0.5h2m0.5 0.5v1m0.5 0.5h2m0 1h2m0.5 0.5v1m0.5 0.5h2m0.5 0.5v1" stroke="#800000"/>
<path d="M477.5 51v3m-1 0v4m-1 0v2m-1 0v4m-1 0v4m-1 0v2m-1 0v4m-1 0v5m-1 0v4m-1 0v2m-1 0v4m-1 0v5m-1 0v4m-1 0v2m-1 0v4m-1 0v5m-1 0v5m-1 0v4m-1 0v2m-1 0v4m-1 0v5m-1 0v5m-1 0v5m-1 0v5m-1 0v5m-1 0v5m-1 0v5m-1 0v5m-1 0v5m-1 0v10m-1 0v5m-1 0v5m-1 0v10m-1 0v5m-1 0v10m-1 0v10m-1 0v10m-1 0v15m-1 0v65m1 0v10m1 0v10m1 0v10m1 0v5m1 0v5m1 0v5m1 0v10m1 0v4m1 0v2m1 0v4m1 0v5m1 0v5m1 0v5m1 0v4m1 0v2m1 0v4m1 0v4m1 0v2m1 0v4m1 0v4m1 0v2m1 0v3m1 0v2m1 0v4m1 0v4m1 0v2m1 0v3m1 0v2m1 0v3m1 0v2m1 0v3m1 0v2m1 0v2m1 0v2m1 0v2m1 0v2m1 0v2m1 0v3m1 0v2m1 0v2m1 0v2m1 0v2m1 0v2m1 0v2m1 0v2m1 0v2m1 0v2m1 0v2m1 0v2m1 0v2m1 0v2m1 0v2m1 0v1m1 0v2m1 0v2m1 0v1m1 0v2m1 0v2m1 0v1m1 0v2m1 0v2m1 0v1m1 0v2m1 0v2m1 0v1m1 0v1m1 0v2m1 0v1m1 0v1m1 0v2m1 0v2m1 0v1m1 0v2m1 0v2m1 0v1m1 0v1m1 0v2m1 0v1m1 0v1m1 0v2m1 0v2m1 0v1m1 0v1m1 0v2m1 0v1m1 0v1m1 0v1m1 0v2m1 0v1m1 0v1m1 0v1m1 0v2m1 0v1m1 0v1m1 0v1m1 0v2m1 0v1m1 0v1m1 0v1m1 0v2m1 0v1m1 0v1m1 0v1m1 0v2m1 0v1m1 0v1m1 0v1m1 0v1m1 0v1m1 0v1m1 0v1m1 0v1m1 0v2m1 0v1m1 0v1m1 0v1m1 0v1m1 0v1m1 0v1m1 0v1m1 0v1m1 0v1m1 0v1m1 0v1m1 0v1m1 0v1m1 0v2m1 0v1m1 0v1m1 0v1m1 0v1m1 0v1m1 0v1m1 0v1m1 0v1m1 0v1m1 0v1m1 0v1m1 0v1m1 0v1m1 0v1m1 0v1m1 0v1m1 0v1m1 0v1m0.5 0.5h2m0.5 0.5v1m1 0v1m1 0v1m1 0v1m1 0v1m1 0v1m1 0v1m1 0v1m1 0v1m0.5 0.5h2m0.5 0.5v1m1 0v1m1 0v1m1 0v1m1 0v1m1 0v1m1 0v1m1 0v1m1 0v1m0.5 0.5h2m0.5 0.5v1m1 0v1m1 0v1m1 0v1m0.5 0.5h2m0.5 0.5v1m1 0v1m1 0v1m1 0v1m0.5 0.5h2m0.5 0.5v1m1 0v1m1 0v1m1 0v1m0.5 0.5h2m0.5 0.5v1m1 0v1m1 0v1m0.5 0.5h2m0.5 0.5v1m1 0v1m0.5 0.5h2m0.5 0.5v1m1 0v1m0.5 0.5h2m0.5 0.5v1m1 0v1m1 0v1m0.5 0.5h2m0.5 0.5v1m1 0v1m0.5 0.5h2m0.5 0.5v1m0.5 0.5h2m0.5 0.5v1m1 0v1m0.5 0.5h2m0.5 0.5v1m0.5 0.5h2m0.5 0.5v1m1 0v1" stroke="#800000"/>
<path d="M508.5 51v3m-1 0v5m-1 0v4m-1 0v2m-1 0v4m-1 0v5m-1 0v4m-1 0v2m-1 0v4m-1 0v5m-1 0v5m-1 0v4m-1 0v2m-1 0v4m-1 0v5m-1 0v5m-1 0v5m-1 0v5m-1 0v5m-1 0v5m-1 0v5m-1 0v5m-1 0v5m-1 0v5m-1 0v10m-1 0v5m-1 0v5m-1 0v10m-1 0v5m-1 0v10m-1 0v10m-1 0v15m-1 0v20m-1 0v45m1 0v15m1 0v15m1 0v5m1 0v10m1 0v5m1 0v5m1 0v5m1 0v5m1 0v5m1 0v5m1 0v5m1 0v5m1 0v4m1 0v2m1 0v4m1 0v5m1 0v4m1 0v2m1 0v4m1 0v4m1 0v2m1 0v3m1 0v2m1 0v3m1 0v2m1 0v4m1 0v4m1 0v2m1 0v3m1 0v2m1 0v3m1 0v2m1 0v3m1 0v2m1 0v2m1 0v2m1 0v2m1 0v2m1 0v2m1 0v3m1 0v2m1 0v2m1 0v2m1 0v2m1 0v2m1 0v2m1 0v2m1 0v2m1 0v2m1 0v1m1 0v2m1 0v2m1 0v1m1 0v2m1 0v2m1 0v1m1 0v2m1 0v2m1 0v1m1 0v2m1 0v2m1 0v1m1 0v2m1 0v2m1 0v1m1 0v2m1 0v2m1 0v1m1 0v2m1 0v2m1 0v1m1 0v1m1 0v2m1 0v1m1 0v1m1 0v2m1 0v2m1 0v1m1 0v1m1 0v2m1 0v1m1 0v1m1 0v2m1 0v2m1 0v1m1 0v1m1 0v2m1 0v1m1 0v1m1 0v1m1 0v2m1 0v1m1 0v1m1 0v1m1 0v2m1 0v1m1 0v1m1 0v1m1 0v2m1 0v1m1 0v1m1 0v1m1 0v2m1 0v1m1 0v1m1 0v1m1 0v2m1 0v1m1 0v1m1 0v1m1 0v1m1 0v1m1 0v1m1 0v1m1 0v1m1 0v2m1 0v1m1 0v1m1 0v1m1 0v1m1 0v1m1 0v1m1 0v1m1 0v1m1 0v1m1 0v1m1 0v1m1 0v1m1 0v1m1 0v1m1 0v1m1 0v1m1 0v1m1 0v1m1 0v1m1 0v1m1 0v1m1 0v1m1 0v1m1 0v1m1 0v1m1 0v1m1 0v1m1 0v1m1 0v1m1 0v1m1 0v1m1 0v1m1 0v1m1 0v1m1 0v1m1 0v1m1 0v1m1 0v1m0.5 0.5h2m0.5 0.5v1m1 0v1m1 0v1m1 0v1m1 0v1m1 0v1m1 0v1m1 0v1m1 0v1m0.5 0.5h2m0.5 0.5v1m1 0v1m1 0v1m1 0v1m0.5 0.5h2m0.5 0.5v1m1 0v1m1 0v1m1 0v1m0.5 0.5h2m0.5 0.5v1m1 0v1m1 0v1m1 0v1m0.5 0.5h2" stroke="#800000"/>
<path d="M540.5 51v2m-1 0v2m-1 0v4m-1 0v5m-1 0v4m-1 0v2m-1 0v4m-1 0v5m-1 0v5m-1 0v5m-1 0v5m-1 0v5m-1 0v5m-1 0v5m-1 0v5m-1 0v5m-1 0v5m-1 0v5m-1 0v5m-1 0v5m-1 0v5m-1 0v10m-1 0v5m-1 0v5m-1 0v10m-1 0v10m-1 0v10m-1 0v15m-1 0v15m-1 0v50m1 0v15m1 0v15m1 0v5m1 0v10m1 0v5m1 0v10m1 0v5m1 0v5m1 0v4m1 0v2m1 0v4m1 0v5m1 0v5m1 0v4m1 0v2m1 0v4m1 0v5m1 0v4m1 0v2m1 0v3m1 0v2m1 0v4m1 0v4m1 0v2m1 0v3m1 0v2m1 0v3m1 0v2m1 0v3m1 0v2m1 0v3m1 0v2m1 0v3m1 0v2m1 0v3m1 0v2m1 0v3m1 0v2m1 0v2m1 0v2m1 0v2m1 0v2m1 0v2m1 0v2m1 0v2m1 0v2m1 0v2m1 0v2m1 0v2m1 0v2m1 0v2m1 0v1m1 0v2m1 0v2m1 0v1m1 0v2m1 0v2m1 0v2m1 0v2m1 0v2m1 0v1m1 0v2m1 0v1m1 0v1m1 0v2m1 0v2m1 0v1m1 0v2m1 0v2m1 0v1m1 0v2m1 0v2m1 0v1m1 0v1m1 0v2m1 0v1m1 0v1m1 0v2m1 0v2m1 0v1m1 0v1m1 0v2m1 0v1m1 0v1m1 0v1m1 0v2m1 0v1m1 0v1m1 0v2m1 0v2m1 0v1m1 0v1m1 0v2m1 0v1m1 0v1m1 0v1m1 0v2m1 0v1m1 0v1m1 0v1m1 0v2m1 0v1m1 0v1m1 0v1m1 0v1m1 0v1m1 0v1m1 0v1m1 0v1m1 0v2m1 0v1m1 0v1m1 0v1m1 0v2m1 0v1m1 0v1m1 0v1m1 0v1m1 0v1m1 0v1m1 0v1m1 0v1m1 0v1m1 0v1m1 0v1m1 0v1m1 0v1m1 0v1m1 0v1m1 0v1m1 0v1m1 0v1m1 0v2m1 0v1m1 0v1m1 0v1m1 0v1m1 0v1m1 0v1m1 0v1m1 0v1m0.5 0.5h2m0.5 0.5v1m1 0v1m1 0v1m1 0v1m1 0v1m1 0v1" stroke="#800000"/>
<path d="M571.5 51v2m-1 0v2m-1 0v4m-1 0v5m-1 0v5m-1 0v5m-1 0v5m-1 0v5m-1 0v5m-1 0v5m-1 0v5m-1 0v5m-1 0v5m-1 0v5m-1 0v5m-1 0v5m-1 0v10m-1 0v5m-1 0v5m-1 0v10m-1 0v10m-1 0v10m-1 0v10m-1 0v15m-1 0v70m1 0v10m1 0v10m1 0v10m1 0v10m1 0v5m1 0v5m1 0v5m1 0v5m1 0v5m1 0v5m1 0v5m1 0v5m1 0v4m1 0v2m1 0v4m1 0v4m1 0v2m1 0v4m1 0v4m1 0v2m1 0v4m1 0v4m1 0v2m1 0v3m1 0v2m1 0v3m1 0v2m1 0v3m1 0v2m1 0v3m1 0v2m1 0v3m1 0v2m1 0v3m1 0v2m1 0v3m1 0v2m1 0v3m1 0v2m1 0v2m1 0v2m1 0v2m1 0v2m1 0v2m1 0v2m1 0v2m1 0v2m1 0v2m1 0v2m1 0v2m1 0v2m1 0v2m1 0v1m1 0v2m1 0v2m1 0v1m1 0v2m1 0v2m1 0v1m1 0v2m1 0v2m1 0v1m1 0v2m1 0v2m1 0v1m1 0v2m1 0v2m1 0v1m1 0v2m1 0v2m1 0v1m1 0v1m1 0v2m1 0v1m1 0v1m1 0v2m1 0v2m1 0v1m1 0v1m1 0v2m1 0v1m1 0v1m1 0v2m1 0v2m1 0v1m1 0v1m1 0v2m1 0v1m1 0v1m1 0v1m1 0v2m1 0v1m1 0v1m1 0v1m1 0v2m1 0v1m1 0v1m1 0v1m1 0v2m1 0v1m1 0v1m1 0v1m1 0v2m1 0v1m1 0v1m1 0v1m1 0v1m1 0v1m1 0v1m1 0v1m1 0v1m1 0v2m1 0v1" stroke="#800000"/>
<path d="M67.5 747v2m-1 -3v1m-1 -2v1m-1 -2v1m-1 -2v1m-1 -2v1" stroke="#000080"/>
<path d="M128.5 747v2m-2.5 -2.5h2m-2.5 -1.5v1m-1 -2v1m-1 -2v1m-1 -2v1m-1 -2v1m-1 -2v1m-1 -2v1m-1 -2v1m-1 -2v1m-1 -2v1m-1 -2v1m-1 -3v2m-2.5 -2.5h2m-2.5 -1.5v1m-1 -2v1m-1 -3v2m-1 -3v1m-1 -2v1m-1 -2v1m-1 -2v1m-1 -2v1m-1 -2v1m-1 -3v2m-1 -3v1m-2.5 -1.5h2m-2.5 -2.5v2m-1 -3v1m-1 -3v2m-1 -3v1m-1 -3v2m-2.5 -2.5h2m-2.5 -2.5v2m-1 -3v1m-1 -3v2m-1 -3v1m-1 -3v2m-2.5 -2.5h2m-2.5 -2.5v2m-1 -3v1m-1 -3v2m-1 -4v2m-1 -3v1m-1 -2v1m-1 -2v1m-1 -2v1m-1 -3v2m-1 -4v2m-1 -4v2m-2.5 -2.5h2m-2.5 -2.5v2m-1 -4v2m-1 -4v2m-1 -3v1m-1 -2v1m-1 -2v1m-1 -3v2m-1 -4v2m-1 -4v2m-1 -4v2" stroke="#000080"/>
<path d="M188.5 747v2m-2.5 -2.5h2m-2.5 -1.5v1m-1 -2v1m-1 -2v1m-1 -2v1m-1 -2v1m-1 -2v1m-1 -2v1m-1 -2v1m-1 -2v1m-1 -2v1m-1 -2v1m-1 -2v1m-1 -2v1m-1 -2v1m-1 -2v1m-1 -2v1m-1 -3v2m-2.5 -2.5h2m-2.5 -1.5v1m-1 -3v2m-1 -3v1m-1 -2v1m-1 -2v1m-1 -2v1m-1 -2v1m-1 -2v1m-1 -3v2m-2.5 -2.5h2m-2.5 -2.5v2m-1 -3v1m-1 -3v2m-2.5 -2.5h2m-2.5 -2.5v2m-1 -3v1m-1 -3v2m-1 -3v1m-1 -2v1m-1 -2v1m-1 -2v1m-1 -3v2m-1 -3v1m-1 -2v1m-1 -2v1m-1 -3v2m-1 -3v1m-1 -2v1m-1 -2v1m-1 -2v1m-1 -3v2m-1 -4v2m-1 -3v1m-1 -2v1m-1 -2v1m-1 -3v2m-1 -3v1m-1 -2v1m-1 -3v2m-1 -3v1m-1 -3v2m-1 -3v1m-1 -2v1m-1 -3v2m-1 -4v2m-1 -3v1m-1 -2v1m-1 -3v2m-1 -3v1m-1 -2v1m-1 -2v1m-1 -3v2m-1 -4v2m-1 -4v2m-1 -3v1m-1 -3v2m-1 -4v2m-1 -4v2m-1 -3v1m-1 -2v1m-1 -3v2m-1 -4v2m-1 -4v2m-1 -3v1m-1 -3v2m-1 -4v2m-1 -4v2m-1 -3v1m-1 -3v2m-1 -4v2m-1 -4v2m-1 -4v2m-1 -4v2m-1 -3v1m-1 -3v2m-1 -5v3m-1 -5v2m-1 -5v3m-1 -5v2m-1 -3v1m-1 -3v2m-1 -5v3m-1 -6v3m-1 -5v2m-1 -5v3m-1 -5v2m-1 -4v2m-1 -4v2m-1 -5v3m-1 -6v3m-1 -6v3m-1 -6v3m-1 -6v3m-1 -7v4m-1 -6v2m-1 -4v2m-1 -4v2m-1 -6v4m-1 -7v3m-1 -7v4m-1 -7v3m-1 -7v4m-1 -11v7m0 -211v5m1 -10v5m1 -10v5m1 -10v5m1 -11v6m1 -10v4m1 -8v4m1 -8v4m1 -7v3m1 -7v4m1 -8v4m1 -7v3m1 -6v3m1 -6v3m1 -6v3m1 -6v3m1 -6v3m1 -7v4m1 -7v3m1 -6v3m1 -6v3m1 -7v4m1 -7v3m1 -6v3m1 -6v3m1 -6v3m1 -5v2m1 -5v3m1 -6v3m1 -6v3m1 -6v3m1 -5v2m1 -5v3m1 -6v3m1 -6v3m1 -7v4m1 -7v3m1 -6v3m1 -6v3m1 -5v2m1 -4v2m1 -5v3m1 -5v2m1 -4v2m1 -4v2m1 -4v2" stroke="#000080"/>
<path d="M247.5 747v2m-1 -3v1m-1 -2v1m-1 -2v1m-1 -2v1m-1 -2v1m-1 -2v1m-1 -3v2m-2.5 -2.5h2m-2.5 -1.5v1m-1 -2v1m-1 -2v1m-1 -3v2m-1 -3v1m-1 -2v1m-2.5 -1.5h2m-2.5 -2.5v2m-1 -3v1m-1 -2v1m-1 -3v2m-2.5 -2.5h2m-2.5 -1.5v1m-1 -3v2m-1 -3v1m-1 -2v1m-1 -2v1m-1 -2v1m-1 -2v1m-1 -3v2m-1 -3v1m-1 -3v2m-2.5 -2.5h2m-2.5 -2.5v2m-1 -3v1m-1 -3v2m-2.5 -2.5h2m-2.5 -2.5v2m-1 -3v1m-1 -3v2m-2.5 -2.5h2m-2.5 -2.5v2m-1 -4v2m-2.5 -2.5h2m-2.5 -2.5v2m-1 -3v1m-1 -2v1m-1 -2v1m-1 -3v2m-1 -4v2m-2.5 -2.5h2m-2.5 -2.5v2m-1 -4v2m-1 -3v1m-1 -2v1m-1 -2v1m-1 -2v1m-1 -2v1m-1 -3v2m-1 -4v2m-1 -3v1m-1 -2v1m-1 -3v2m-1 -4v2m-2.5 -2.5h2m-2.5 -2.5v2m-1 -3v1m-1 -2v1m-1 -3v2m-1 -4v2m-1 -3v1m-1 -3v2m-1 -4v2m-1 -3v1m-1 -2v1m-1 -3v2m-1 -4v2m-1 -3v1m-1 -2v1m-1 -3v2m-1 -3v1m-1 -3v2m-1 -4v2m-1 -4v2m-1 -3v1m-1 -3v2m-1 -4v2m-1 -3v1m-1 -2v1m-1 -3v2m-1 -5v3m-1 -4v1m-1 -3v2m-1 -4v2m-1 -4v2m-1 -4v2m-1 -4v2m-1 -4v2m-1 -3v1m-1 -3v2m-1 -4v2m-1 -5v3m-1 -4v1m-1 -3v2m-1 -4v2m-1 -5v3m-1 -6v3m-1 -5v2m-1 -4v2m-1 -4v2m-1 -5v3m-1 -5v2m-1 -4v2m-1 -4v2m-1 -6v4m-1 -6v2m-1 -4v2m-1 -4v2m-1 -6v4m-1 -7v3m-1 -7v4m-1 -6v2m-1 -4v2m-1 -5v3m-1 -7v4m-1 -7v3m-1 -7v4m-1 -8v4m-1 -8v4m-1 -8v4m-1 -8v4m-1 -9v5m-1 -9v4m-1 -8v4m-1 -9v5m-1 -9v4m-1 -9v5m-1 -15v10m-1 -15v5m-1 -16v11m-1 -22v11m-1 -70v59m1 -74v15m1 -23v8m1 -17v9m1 -17v8m1 -17v9m1 -16v7m1 -12v5m1 -10v5m1 -10v5m1 -10v5m1 -11v6m1 -11v5m1 -11v6m1 -10v4m1 -8v4m1 -8v4m1 -8v4m1 -8v4m1 -8v4m1 -7v3m1 -6v3m1 -7v4m1 -7v3m1 -7v4m1 -8v4m1 -8v4m1 -8v4m1 -7v3m1 -6v3m1 -5v2m1 -5v3m1 -6v3m1 -7v4m1 -7v3m1 -7v4m1 -7v3m1 -6v3m1 -7v4m1 -7v3m1 -6v3m1 -6v3m1 -6v3m1 -5v2m1 -5v3m1 -6v3m1 -5v2m1 -5v3m1 -5v2m1 -5v3m1 -5v2m1 -4v2m1 -5v3m1 -5v2m1 -5v3m1 -6v3m1 -5v2m1 -5v3m1 -6v3m1 -5v2m1 -5v3m1 -6v3m1 -5v2m1 -4v2m1 -5v3m1 -5v2m1 -5v3m1 -5v2m1 -4v2m1 -5v3m1 -5v2m1 -4v2m1 -5v3m1 -5v2m1 -4v2m1 -5v3m1 -5v2m1 -4v2m1 -4v2" stroke="#000080"/>
<path d="M306.5 747v2m-1 -3v1m-1 -2v1m-1 -3v2m-1 -3v1m-1 -2v1m-1 -3v2m-1 -3v1m-1 -2v1m-1 -2v1m-1 -2v1m-1 -3v2m-1 -3v1m-1 -2v1m-1 -2v1m-1 -3v2m-1 -3v1m-1 -2v1m-1 -3v2m-1 -3v1m-1 -2v1m-1 -2v1m-1 -2v1m-1 -2v1m-1 -2v1m-1 -3v2m-1 -3v1m-1 -3v2m-1 -3v1m-1 -3v2m-1 -3v1m-1 -3v2m-1 -3v1m-1 -2v1m-1 -2v1m-1 -2v1m-1 -3v2m-1 -3v1m-1 -3v2m-2.5 -2.5h2m-2.5 -2.5v2m-1 -4v2m-1 -3v1m-1 -3v2m-2.5 -2.5h2m-2.5 -2.5v2m-1 -4v2m-1 -3v1m-1 -2v1m-1 -2v1m-1 -3v2m-1 -3v1m-1 -2v1m-1 -3v2m-1 -3v1m-1 -2v1m-1 -2v1m-1 -3v2m-1 -4v2m-1 -3v1m-1 -2v1m-1 -3v2m-1 -4v2m-2.5 -2.5h2m-2.5 -2.5v2m-1 -3v1m-1 -2v1m-1 -3v2m-1 -3v1m-1 -2v1m-1 -3v2m-1 -5v3m-1 -4v1m-1 -2v1m-1 -3v2m-1 -3v1m-1 -2v1m-1 -3v2m-1 -3v1m-1 -2v1m-1 -3v2m-1 -4v2m-1 -3v1m-1 -3v2m-1 -3v1m-1 -3v2m-1 -4v2m-1 -3v1m-1 -2v1m-1 -3v2m-1 -4v2m-1 -3v1m-1 -3v2m-1 -4v2m-1 -3v1m-1 -3v2m-1 -4v2m-1 -4v2m-1 -4v2m-1 -3v1m-1 -3v2m-1 -4v2m-1 -4v2m-1 -3v1m-1 -3v2m-1 -5v3m-1 -5v2m-1 -4v2m-1 -4v2m-1 -4v2m-1 -4v2m-1 -4v2m-1 -4v2m-1 -4v2m-1 -4v2m-1 -4v2m-1 -4v2m-1 -5v3m-1 -5v2m-1 -4v2m-1 -4v2m-1 -5v3m-1 -5v2m-1 -4v2m-1 -6v4m-1 -6v2m-1 -4v2m-1 -5v3m-1 -6v3m-1 -5v2m-1 -4v2m-1 -6v4m-1 -7v3m-1 -5v2m-1 -5v3m-1 -7v4m-1 -8v4m-1 -8v4m-1 -6v2m-1 -5v3m-1 -7v4m-1 -9v5m-1 -9v4m-1 -9v5m-1 -10v5m-1 -10v5m-1 -10v5m-1 -10v5m-1 -11v6m-1 -11v5m-1 -17v12m-1 -18v6m-1 -25v19m-1 -70v51m1 -60v9m1 -26v17m1 -27v10m1 -17v7m1 -12v5m1 -10v5m1 -11v6m1 -11v5m1 -11v6m1 -11v5m1 -11v6m1 -11v5m1 -9v4m1 -8v4m1 -8v4m1 -8v4m1 -8v4m1 -9v5m1 -9v4m1 -8v4m1 -8v4m1 -8v4m1 -7v3m1 -7v4m1 -7v3m1 -7v4m1 -7v3m1 -7v4m1 -8v4m1 -8v4m1 -8v4m1 -8v4m1 -7v3m1 -6v3m1 -5v2m1 -5v3m1 -6v3m1 -5v2m1 -5v3m1 -6v3m1 -6v3m1 -5v2m1 -5v3m1 -6v3m1 -6v3m1 -6v3m1 -6v3m1 -7v4m1 -7v3m1 -6v3m1 -6v3m1 -5v2m1 -4v2m1 -5v3m1 -5v2m1 -5v3m1 -5v2m1 -4v2m1 -5v3m1 -5v2m1 -5v3m1 -6v3m1 -5v2m1 -5v3m1 -6v3m1 -5v2m1 -5v3m1 -5v2m1 -5v3m1 -5v2m1 -5v3m1 -6v3m1 -5v2m1 -5v3m1 -5v2m1 -5v3m1 -5v2m1 -4v2m1 -4v2m1 -4v2m1 -5v3m1 -5v2m1 -4v2m1 -4v2m1 -4v2m1 -4v2m1 -5v3m1 -5v2m1 -4v2m1 -4v2m1 -4v2m1 -4v2m1 -5v3m1 -5v2" stroke="#000080"/>
<path d="M365.5 747v2m-1 -3v1m-1 -3v2m-1 -3v1m-1 -2v1m-1 -4v3m-1 -4v1m-1 -3v2m-1 -3v1m-1 -3v2m-1 -4v2m-1 -3v1m-1 -3v2m-1 -4v2m-1 -4v2m-1 -3v1m-1 -4v3m-1 -4v1m-1 -2v1m-1 -3v2m-1 -5v3m-1 -4v1m-1 -3v2m-1 -3v1m-1 -3v2m-1 -3v1m-1 -4v3m-1 -5v2m-1 -3v1m-1 -3v2m-1 -3v1m-1 -3v2m-1 -4v2m-1 -3v1m-1 -3v2m-1 -3v1m-1 -3v2m-1 -4v2m-1 -4v2m-1 -3v1m-1 -3v2m-1 -3v1m-1 -2v1m-1 -3v2m-1 -3v1m-1 -3v2m-1 -4v2m-1 -4v2m-1 -4v2m-1 -3v1m-1 -2v1m-1 -3v2m-1 -3v1m-1 -3v2m-1 -3v1m-1 -2v1m-1 -3v2m-1 -4v2m-1 -4v2m-1 -4v2m-1 -3v1m-1 -3v2m-1 -4v2m-1 -3v1m-1 -2v1m-1 -3v2m-1 -3v1m-1 -2v1m-1 -3v2m-1 -5v3m-1 -4v1m-1 -2v1m-1 -3v2m-1 -4v2m-1 -3v1m-1 -3v2m-1 -3v1m-1 -3v2m-1 -4v2m-1 -4v2m-1 -4v2m-1 -3v1m-1 -3v2m-1 -4v2m-1 -4v2m-1 -4v2m-1 -3v1m-1 -3v2m-1 -3v1m-1 -3v2m-1 -4v2m-1 -3v1m-1 -3v2m-1 -4v2m-1 -4v2m-1 -4v2m-1 -4v2m-1 -4v2m-1 -4v2m-1 -4v2m-1 -4v2m-1 -4v2m-1 -3v1m-1 -3v2m-1 -4v2m-1 -5v3m-1 -5v2m-1 -3v1m-1 -3v2m-1 -4v2m-1 -5v3m-1 -5v2m-1 -4v2m-1 -5v3m-1 -5v2m-1 -3v1m-1 -3v2m-1 -5v3m-1 -6v3m-1 -5v2m-1 -4v2m-1 -5v3m-1 -5v2m-1 -5v3m-1 -6v3m-1 -5v2m-1 -5v3m-1 -6v3m-1 -5v2m-1 -6v4m-1 -7v3m-1 -5v2m-1 -5v3m-1 -7v4m-1 -6v2m-1 -5v3m-1 -7v4m-1 -6v2m-1 -6v4m-1 -9v5m-1 -10v5m-1 -9v4m-1 -6v2m-1 -7v5m-1 -10v5m-1 -11v6m-1 -12v6m-1 -12v6m-1 -12v6m-1 -12v6m-1 -19v13m-1 -27v14m-1 -30v16m-1 -40v24m1 -51v27m1 -37v10m1 -20v10m1 -18v8m1 -14v6m1 -14v8m1 -16v8m1 -12v4m1 -8v4m1 -9v5m1 -11v6m1 -12v6m1 -10v4m1 -8v4m1 -9v5m1 -10v5m1 -9v4m1 -9v5m1 -10v5m1 -9v4m1 -9v5m1 -9v4m1 -8v4m1 -8v4m1 -7v3m1 -6v3m1 -7v4m1 -7v3m1 -6v3m1 -6v3m1 -7v4m1 -7v3m1 -6v3m1 -7v4m1 -7v3m1 -6v3m1 -6v3m1 -7v4m1 -7v3m1 -6v3m1 -6v3m1 -6v3m1 -5v2m1 -5v3m1 -6v3m1 -5v2m1 -5v3m1 -6v3m1 -6v3m1 -6v3m1 -6v3m1 -6v3m1 -6v3m1 -6v3m1 -6v3m1 -5v2m1 -5v3m1 -5v2m1 -5v3m1 -6v3m1 -5v2m1 -5v3m1 -5v2m1 -5v3m1 -5v2m1 -5v3m1 -5v2m1 -4v2m1 -5v3m1 -5v2m1 -5v3m1 -5v2m1 -4v2m1 -5v3m1 -5v2m1 -4v2m1 -5v3m1 -5v2m1 -5v3m1 -5v2m1 -3v1" stroke="#000080"/>
<path d="M423.5 747v2m-1 -5v3m-1 -5v2m-1 -5v3m-1 -6v3m-1 -6v3m-1 -5v2m-1 -6v4m-1 -7v3m-1 -5v2m-1 -5v3m-1 -6v3m-1 -7v4m-1 -7v3m-1 -6v3m-1 -6v3m-1 -6v3m-1 -5v2m-1 -5v3m-1 -6v3m-1 -6v3m-1 -5v2m-1 -6v4m-1 -5v1m-1 -5v4m-1 -6v2m-1 -5v3m-1 -5v2m-1 -6v4m-1 -6v2m-1 -4v2m-1 -3v1m-1 -5v4m-1 -6v2m-1 -4v2m-1 -4v2m-1 -5v3m-1 -7v4m-1 -6v2m-1 -4v2m-1 -4v2m-1 -4v2m-1 -5v3m-1 -5v2m-1 -4v2m-1 -5v3m-1 -5v2m-1 -4v2m-1 -5v3m-1 -5v2m-1 -4v2m-1 -3v1m-1 -3v2m-1 -5v3m-1 -6v3m-1 -5v2m-1 -4v2m-1 -4v2m-1 -4v2m-1 -4v2m-1 -5v3m-1 -5v2m-1 -4v2m-1 -4v2m-1 -5v3m-1 -5v2m-1 -4v2m-1 -4v2m-1 -4v2m-1 -4v2m-1 -4v2m-1 -5v3m-1 -5v2m-1 -4v2m-1 -4v2m-1 -4v2m-1 -5v3m-1 -5v2m-1 -4v2m-1 -5v3m-1 -5v2m-1 -4v2m-1 -5v3m-1 -6v3m-1 -5v2m-1 -3v1m-1 -3v2m-1 -5v3m-1 -6v3m-1 -5v2m-1 -5v3m-1 -6v3m-1 -5v2m-1 -4v2m-1 -4v2m-1 -6v4m-1 -7v3m-1 -5v2m-1 -4v2m-1 -4v2m-1 -6v4m-1 -7v3m-1 -5v2m-1 -5v3m-1 -5v2m-1 -6v4m-1 -8v4m-1 -6v2m-1 -6v4m-1 -8v4m-1 -6v2m-1 -5v3m-1 -6v3m-1 -7v4m-1 -8v4m-1 -7v3m-1 -8v5m-1 -11v6m-1 -10v4m-1 -7v3m-1 -8v5m-1 -12v7m-1 -13v6m-1 -13v7m-1 -14v7m-1 -15v8m-1 -16v8m-1 -15v7m-1 -24v17m-1 -64v47m1 -58v11m1 -22v11m1 -23v12m1 -21v9m1 -15v6m1 -13v7m1 -13v6m1 -13v7m1 -14v7m1 -13v6m1 -11v5m1 -9v4m1 -9v5m1 -11v6m1 -11v5m1 -10v5m1 -9v4m1 -8v4m1 -8v4m1 -8v4m1 -8v4m1 -8v4m1 -8v4m1 -8v4m1 -8v4m1 -8v4m1 -8v4m1 -8v4m1 -7v3m1 -6v3m1 -6v3m1 -7v4m1 -7v3m1 -6v3m1 -6v3m1 -7v4m1 -7v3m1 -7v4m1 -7v3m1 -7v4m1 -7v3m1 -6v3m1 -6v3m1 -6v3m1 -5v2m1 -5v3m1 -6v3m1 -6v3m1 -6v3m1 -6v3m1 -5v2m1 -5v3m1 -6v3m1 -5v2m1 -5v3m1 -6v3m1 -5v2m1 -5v3m1 -5v2m1 -5v3m1 -6v3m1 -5v2m1 -5v3m1 -5v2" stroke="#000080"/>
<path d="M481.5 744v5m-1 -12v7m-1 -16v9m-1 -17v8m-1 -18v10m-1 -22v12m-1 -21v9m-1 -20v11m-1 -20v9m-1 -18v9m-1 -17v8m-1 -17v9m-1 -15v6m-1 -16v10m-1 -17v7m-1 -14v7m-1 -15v8m-1 -14v6m-1 -14v8m-1 -14v6m-1 -12v6m-1 -9v3m-1 -10v7m-1 -13v6m-1 -10v4m-1 -11v7m-1 -10v3m-1 -7v4m-1 -11v7m-1 -11v4m-1 -8v4m-1 -8v4m-1 -8v4m-1 -8v4m-1 -9v5m-1 -9v4m-1 -8v4m-1 -9v5m-1 -9v4m-1 -8v4m-1 -6v2m-1 -6v4m-1 -9v5m-1 -10v5m-1 -9v4m-1 -6v2m-1 -7v5m-1 -10v5m-1 -9v4m-1 -7v3m-1 -8v5m-1 -11v6m-1 -10v4m-1 -7v3m-1 -8v5m-1 -10v5m-1 -8v3m-1 -8v5m-1 -12v7m-1 -12v5m-1 -9v4m-1 -10v6m-1 -14v8m-1 -13v5m-1 -9v4m-1 -10v6m-1 -15v9m-1 -17v8m-1 -17v9m-1 -29v20m-1 -76v56m1 -69v13m1 -27v14m1 -28v14m1 -25v11m1 -19v8m1 -14v6m1 -12v6m1 -11v5m1 -10v5m1 -11v6m1 -12v6m1 -12v6m1 -12v6m1 -12v6m1 -11v5m1 -9v4m1 -8v4m1 -8v4m1 -8v4m1 -8v4m1 -8v4m1 -8v4m1 -8v4m1 -8v4m1 -8v4m1 -8v4m1 -8v4m1 -8v4m1 -8v4m1 -8v4m1 -7v3m1 -7v4m1 -7v3m1 -7v4m1 -7v3m1 -6v3m1 -7v4m1 -7v3m1 -6v3m1 -7v4m1 -7v3m1 -6v3m1 -5v2" stroke="#000080"/>
<path d="M540.5 726v23m1 -37v14m1 -26v12m1 -22v10m1 -20v10m1 -21v11m1 -18v7m1 -17v10m1 -19v9m1 -15v6m1 -16v10m1 -17v7m1 -12v5m1 -13v8m1 -16v8m1 -13v5m1 -11v6m1 -15v9m1 -15v6m1 -13v7m1 -14v7m1 -14v7m1 -14v7m1 -14v7m1 -15v8m1 -16v8m1 -12v4m1 -13v9m1 -18v9m1 -18v9m1 -14v5m1 -15v10m1 -15v5m1 -16v11m1 -23v12m1 -18v6m1 -18v12m1 -25v13m1 -20v7m1 -22v15m1 -30v15m1 -40v25m1 -54v29m1 -50v21m1 -44v23m1 -48v25m1 -53v28m1 -43v15m1 -31v16m1 -28v12m1 -20v8m1 -17v9m1 -19v10m1 -19v9m1 -19v10m1 -17v7m1 -12v5m1 -11v6m1 -11v5m1 -11v6m1 -14v8m1 -16v8m1 -14v6m1 -11v5m1 -10v5m1 -9v4m1 -9v5m1 -10v5m1 -9v4m1 -8v4m1 -9v5m1 -6v1" stroke="#000080"/>
<path d="M599.5 745v4m1 -12v8m1 -15v7m1 -14v7m1 -12v5m1 -11v6m1 -12v6m1 -11v5m1 -9v4m1 -9v5m1 -8v3m1 -9v6m1 -11v5m1 -8v3m1 -9v6m1 -10v4m1 -7v3m1 -7v4m1 -8v4m1 -9v5m1 -9v4m1 -6v2m1 -6v4m1 -9v5m1 -7v2m1 -7v5m1 -7v2m1 -7v5m1 -7v2m1 -5v3m1 -8v5m1 -8v3m1 -5v2m1 -5v3m1 -6v3m1 -8v5m1 -8v3m1 -6v3m1 -6v3m1 -6v3m1 -6v3m1 -6v3m1 -6v3m1 -7v4m1 -7v3m1 -6v3m1 -6v3m1 -5v2m1 -4v2m1 -6v4m1 -7v3m1 -6v3m1 -5v2m1 -5v3m1 -6v3m1 -6v3m1 -5v2m1 -5v3m1 -7v4m1 -7v3m1 -5v2m1 -4v2" stroke="#000080"/>
<path d="M659.5 743v6m1 -11v5" stroke="#000080"/>
<line x1="-667.5" y1="749.5" x2="31.5" y2="50.5" stroke="#fff" stroke-width="1" />
<line x1="-607.5" y1="749.5" x2="91.5" y2="50.5" stroke="#fff" stroke-width="1" />
<line x1="-547.5" y1="749.5" x2="151.5" y2="50.5" stroke="#fff" stroke-width="1" />
<line x1="-487.5" y1="749.5" x2="211.5" y2="50.5" stroke="#fff" stroke-width="1" />
<line x1="-427.5" y1="749.5" x2="271.5" y2="50.5" stroke="#fff" stroke-width="1" />
<line x1="-367.5" y1="749.5" x2="331.5" y2="50.5" stroke="#fff" stroke-width="1" />
<line x1="-307.5" y1="749.5" x2="391.5" y2="50.5" stroke="#fff" stroke-width="1" />
<line x1="-247.5" y1="749.5" x2="451.5" y2="50.5" stroke="#fff" stroke-width="1" />
<line x1="-187.5" y1="749.5" x2="511.5" y2="50.5" stroke="#fff" stroke-width="1" />
<line x1="-127.5" y1="749.5" x2="571.5" y2="50.5" stroke="#fff" stroke-width="1" />
<line x1="-67.5" y1="749.5" x2="631.5" y2="50.5" stroke="#fff" stroke-width="1" />
<line x1="-7.5" y1="749.5" x2="691.5" y2="50.5" stroke="#fff" stroke-width="1" />
<line x1="52.5" y1="749.5" x2="751.5" y2="50.5" stroke="#fff" stroke-width="1" />
<line x1="112.5" y1="749.5" x2="811.5" y2="50.5" stroke="#fff" stroke-width="1" />
<line x1="172.5" y1="749.5" x2="871.5" y2="50.5" stroke="#fff" stroke-width="1" />
<line x1="232.5" y1="749.5" x2="931.5" y2="50.5" stroke="#fff" stroke-width="1" />
<line x1="292.5" y1="749.5" x2="991.5" y2="50.5" stroke="#fff" stroke-width="1" />
<line x1="352.5" y1="749.5" x2="1051.5" y2="50.5" stroke="#fff" stroke-width="1" />
<line x1="412.5" y1="749.5" x2="1111.5" y2="50.5" stroke="#fff" stroke-width="1" />
<line x1="472.5" y1="749.5" x2="1171.5" y2="50.5" stroke="#fff" stroke-width="1" />
<line x1="532.5" y1="749.5" x2="1231.5" y2="50.5" stroke="#fff" stroke-width="1" />
<line x1="592.5" y1="749.5" x2="1291.5" y2="50.5" stroke="#fff" stroke-width="1" />
<line x1="652.5" y1="749.5" x2="1351.5" y2="50.5" stroke="#fff" stroke-width="1" />
</g>
<line x1="56.0" y1="50.5" x2="667.0" y2="50.5" stroke="#fff" stroke-width="1" />
<line x1="56.0" y1="321.5" x2="667.0" y2="321.5" stroke="#fff" stroke-width="1" />
<line x1="56.0" y1="449.5" x2="667.0" y2="449.5" stroke="#fff" stroke-width="1" />
<line x1="56.0" y1="529.5" x2="667.0" y2="529.5" stroke="#fff" stroke-width="1" />
<line x1="56.0" y1="586.5" x2="667.0" y2="586.5" stroke="#fff" stroke-width="1" />
<line x1="56.0" y1="630.5" x2="667.0" y2="630.5" stroke="#fff" stroke-width="1" />
<line x1="56.0" y1="665.5" x2="667.0" y2="665.5" stroke="#fff" stroke-width="1" />
<line x1="56.0" y1="694.5" x2="667.0" y2="694.5" stroke="#fff" stroke-width="1" />
<line x1="56.0" y1="719.5" x2="667.0" y2="719.5" stroke="#fff" stroke-width="1" />
<line x1="56.0" y1="740.5" x2="661.5" y2="740.5" stroke="#fff" stroke-width="1" />
<line x1="61.5" y1="50.0" x2="61.5" y2="755.0" stroke="#fff" stroke-width="1" />
<line x1="661.5" y1="50.0" x2="661.5" y2="755.0" stroke="#fff" stroke-width="1" />
<line x1="61.0" y1="749.5" x2="662.0" y2="749.5" stroke="#fff" stroke-width="1" />
<line x1="121.5" y1="749.0" x2="121.5" y2="755.0" stroke="#fff" stroke-width="1" />
<line x1="181.5" y1="749.0" x2="181.5" y2="755.0" stroke="#fff" stroke-width="1" />
<line x1="241.5" y1="749.0" x2="241.5" y2="755.0" stroke="#fff" stroke-width="1" />
<line x1="301.5" y1="749.0" x2="301.5" y2="755.0" stroke="#fff" stroke-width="1" />
<line x1="361.5" y1="749.0" x2="361.5" y2="755.0" stroke="#fff" stroke-width="1" />
<line x1="421.5" y1="749.0" x2="421.5" y2="755.0" stroke="#fff" stroke-width="1" />
<line x1="481.5" y1="749.0" x2="481.5" y2="755.0" stroke="#fff" stroke-width="1" />
<line x1="541.5" y1="749.0" x2="541.5" y2="755.0" stroke="#fff" stroke-width="1" />
<line x1="601.5" y1="749.0" x2="601.5" y2="755.0" stroke="#fff" stroke-width="1" />
<line x1="62.0" y1="688.5" x2="626.0" y2="688.5" stroke="#ff00ff" stroke-width="1" />
<g clip-path="url(#c)">
<path d="M402.5 51v1m-1 0v3m-1 0v3m-1 0v3m-1 0v3m-1 0v3m-1 0v3m-1 0v3m-1 0v3m-1 0v3m-1 0v3m-1 0v3m-1 0v3m-1 0v2m-1 0v3m-1 0v3m-1 0v3m-1 0v3m-1 0v3m-1 0v3m-1 0v3m-1 0v3m-1 0v3m-1 0v3m-1 0v3m-1 0v4m-1 0v4m-1 0v4m-1 0v4m-1 0v4m-1 0v5m-1 0v4m-1 0v4m-1 0v4m-1 0v4m-1 0v5m-1 0v5m-1 0v6m-1 0v5m-1 0v5m-1 0v5m-1 0v6m-1 0v5m-1 0v5m-1 0v5m-1 0v6m-1 0v5m-1 0v7m-1 0v8m-1 0v8m-1 0v8m-1 0v8m-1 0v8m-1 0v26m-1 0v31m1 0v20m1 0v13m1 0v7m1 0v6m1 0v6m1 0v6m1 0v5m1 0v5m1 0v6m1 0v5m1 0v5m1 0v6m1 0v5m1 0v4m1 0v4m1 0v5m1 0v4m1 0v4m1 0v4m1 0v3m1 0v4m1 0v3m1 0v3m1 0v4m1 0v3m1 0v3m1 0v4m1 0v3m1 0v4m1 0v3m1 0v4m1 0v3m1 0v2m1 0v2m1 0v2m1 0v2m1 0v3m1 0v3m1 0v2m1 0v3m1 0v4m1 0v3m1 0v3m1 0v4m1 0v3m1 0v3m1 0v3m1 0v3m1 0v3m1 0v2m1 0v3m1 0v2m1 0v2m1 0v3m1 0v3m1 0v2m1 0v3m1 0v4m1 0v5m1 0v4m1 0v2m1 0v3m1 0v2m1 0v2m1 0v4m1 0v4m1 0v4m1 0v4m1 0v4m1 0v4m1 0v3m1 0v4m1 0v3m1 0v3m1 0v2m1 0v3m1 0v2m1 0v3m1 0v2m1 0v2m1 0v2m1 0v4m1 0v4m1 0v4m1 0v5m1 0v5m1 0v4m1 0v4m1 0v4m1 0v5m1 0v5m1 0v3m1 0v1m0.5 0.5h2m0.5 0.5v1m1 0v1m1 0v1m1 0v1m0.5 0.5h2m0.5 0.5v1m1 0v1m1 0v1m0.5 0.5h2m0.5 0.5v1m1 0v1m0.5 0.5h2m0.5 0.5v1m1 0v1m0.5 0.5h2m0.5 0.5v1m0.5 0.5h2m0.5 0.5v1m1 0v1m0.5 0.5h2m0.5 0.5v1m1 0v1m0.5 0.5h2m0.5 0.5v1m0.5 0.5h2m0.5 0.5v1m1 0v1m0.5 0.5h2m0.5 0.5v1m0.5 0.5h2m0.5 0.5v1m1 0v1m0.5 0.5h2m0.5 0.5v1m1 0v1m0.5 0.5h2m0.5 0.5v1m0.5 0.5h2m0.5 0.5v1m1 0v1m0.5 0.5h2m0.5 0.5v1m1 0v1m0.5 0.5h2m0.5 0.5v1" stroke="#ffc8ff"/>
<path d="M397.5 51v1m-1 0v3m-1 0v3m-1 0v3m-1 0v3m-1 0v3m-1 0v4m-1 0v3m-1 0v3m-1 0v3m-1 0v3m-1 0v3m-1 0v3m-1 0v3m-1 0v3m-1 0v3m-1 0v3m-1 0v3m-1 0v4m-1 0v3m-1 0v3m-1 0v3m-1 0v3m-1 0v3m-1 0v3m-1 0v4m-1 0v4m-1 0v4m-1 0v4m-1 0v4m-1 0v3m-1 0v4m-1 0v4m-1 0v4m-1 0v4m-1 0v4m-1 0v5m-1 0v5m-1 0v4m-1 0v5m-1 0v5m-1 0v5m-1 0v5m-1 0v5m-1 0v5m-1 0v4m-1 0v5m-1 0v5m-1 0v7m-1 0v8m-1 0v8m-1 0v8m-1 0v8m-1 0v8m-1 0v26m-1 0v31m1 0v20m1 0v15m1 0v10m1 0v9m1 0v8m1 0v9m1 0v9m1 0v8m1 0v6m1 0v3m1 0v4m1 0v3m1 0v3m1 0v3m1 0v4m1 0v3m1 0v3m1 0v3m1 0v3m1 0v3m1 0v2m1 0v3m1 0v3m1 0v3m1 0v3m1 0v3m1 0v3m1 0v3m1 0v3m1 0v3m1 0v3m1 0v3m1 0v4m1 0v4m1 0v3m1 0v2m1 0v2m1 0v2m1 0v2m1 0v4m1 0v3m1 0v3m1 0v4m1 0v3m1 0v2m1 0v2m1 0v3m1 0v2m1 0v2m1 0v3m1 0v4m1 0v3m1 0v3m1 0v4m1 0v3m1 0v2m1 0v2m1 0v2m1 0v2m1 0v2m1 0v2m1 0v2m1 0v2m1 0v2m1 0v2m1 0v2m1 0v2m1 0v3m1 0v4m1 0v4m1 0v4m1 0v4m1 0v4m1 0v3m1 0v4m1 0v3m1 0v4m1 0v5m1 0v4m1 0v2m1 0v2m1 0v2m1 0v3m1 0v3m1 0v3m1 0v6m1 0v6m1 0v4m1 0v4m1 0v3m1 0v4m1 0v4m1 0v4m1 0v4m1 0v3m1 0v1m0.5 0.5h2m0.5 0.5v1m1 0v1m0.5 0.5h2m0.5 0.5v1m1 0v1m0.5 0.5h2m0.5 0.5v1m1 0v1m0.5 0.5h2m0.5 0.5v1m1 0v1m0.5 0.5h2m0.5 0.5v1m1 0v1m0.5 0.5h2m0.5 0.5v1m1 0v1m0.5 0.5h2m0.5 0.5v1m1 0v1m0.5 0.5h2m0.5 0.5v1m1 0v1m0.5 0.5h2m0.5 0.5v1m1 0v1m0.5 0.5h2m0.5 0.5v1m1 0v1m0.5 0.5h2m0.5 0.5v1m1 0v1m0.5 0.5h2m0.5 0.5v1m1 0v1m0.5 0.5h2m0.5 0.5v1m1 0v1m0.5 0.5h2m0.5 0.5v1m1 0v1" stroke="#ff00ff"/>
<path d="M437.5 688v1m-1 0v2m-1 0v2m-1 0v2m-1 0v1m-1 0v2m-1 0v2m-1 0v1m-1 0v2m-1 0v2m-1 0v2m-1 0v1m-1 0v2m-1 0v2m-1 0v1m-1 0v2m-1 0v2m-1 0v2m-1 0v1m-1 0v2m-1 0v2m-1 0v1m-1 0v2m-1 0v2m-1 0v2m-1 0v1" stroke="#ff00ff"/>
<path d="M603.7 146.8h5M606.2 144.3v5" stroke="#fff" fill="none"/>
<path d="M455.4 146.8h5M457.9 144.3v5" stroke="#fff" fill="none"/>
<path d="M155.0 146.8h5M157.5 144.3v5" stroke="#fff" fill="none"/>
<path d="M171.2 146.8h5M173.7 144.3v5" stroke="#fff" fill="none"/>
<path d="M532.0 218.7h5M534.5 216.2v5" stroke="#fff" fill="none"/>
<path d="M383.8 218.7h5M386.3 216.2v5" stroke="#fff" fill="none"/>
<path d="M185.0 218.7h5M187.5 216.2v5" stroke="#fff" fill="none"/>
<path d="M201.1 218.7h5M203.6 216.2v5" stroke="#fff" fill="none"/>
<path d="M465.3 274.7h5M467.8 272.2v5" stroke="#fff" fill="none"/>
<path d="M392.8 274.7h5M395.3 272.2v5" stroke="#fff" fill="none"/>
<path d="M227.0 274.7h5M229.5 272.2v5" stroke="#fff" fill="none"/>
<path d="M242.8 274.7h5M245.3 272.2v5" stroke="#fff" fill="none"/>
<path d="M411.7 321.5h5M414.2 319.0v5" stroke="#fff" fill="none"/>
<path d="M366.3 321.5h5M368.8 319.0v5" stroke="#fff" fill="none"/>
<path d="M251.0 321.5h5M253.5 319.0v5" stroke="#fff" fill="none"/>
<path d="M267.0 321.5h5M269.5 319.0v5" stroke="#fff" fill="none"/>
<path d="M383.8 360.5h5M386.3 358.0v5" stroke="#fff" fill="none"/>
<path d="M353.5 360.5h5M356.0 358.0v5" stroke="#fff" fill="none"/>
<path d="M269.0 360.5h5M271.5 358.0v5" stroke="#fff" fill="none"/>
<path d="M285.3 360.5h5M287.8 358.0v5" stroke="#fff" fill="none"/>
<path d="M370.8 394.5h5M373.3 392.0v5" stroke="#fff" fill="none"/>
<path d="M331.8 394.5h5M334.3 392.0v5" stroke="#fff" fill="none"/>
<path d="M269.0 394.5h5M271.5 392.0v5" stroke="#fff" fill="none"/>
<path d="M285.1 394.5h5M287.6 392.0v5" stroke="#fff" fill="none"/>
<path d="M368.0 423.6h5M370.5 421.1v5" stroke="#fff" fill="none"/>
<path d="M325.9 423.6h5M328.4 421.1v5" stroke="#fff" fill="none"/>
<path d="M257.0 423.6h5M259.5 421.1v5" stroke="#fff" fill="none"/>
<path d="M272.9 423.6h5M275.4 421.1v5" stroke="#fff" fill="none"/>
<path d="M366.5 449.5h5M369.0 447.0v5" stroke="#fff" fill="none"/>
<path d="M319.2 449.5h5M321.7 447.0v5" stroke="#fff" fill="none"/>
<path d="M245.0 449.5h5M247.5 447.0v5" stroke="#fff" fill="none"/>
<path d="M260.8 449.5h5M263.3 447.0v5" stroke="#fff" fill="none"/>
<path d="M369.1 472.4h5M371.6 469.9v5" stroke="#fff" fill="none"/>
<path d="M309.1 472.4h5M311.6 469.9v5" stroke="#fff" fill="none"/>
<path d="M221.0 472.4h5M223.5 469.9v5" stroke="#fff" fill="none"/>
<path d="M237.1 472.4h5M239.6 469.9v5" stroke="#fff" fill="none"/>
<path d="M371.2 493.7h5M373.7 491.2v5" stroke="#fff" fill="none"/>
<path d="M305.5 493.7h5M308.0 491.2v5" stroke="#fff" fill="none"/>
<path d="M179.0 493.7h5M181.5 491.2v5" stroke="#fff" fill="none"/>
<path d="M195.0 493.7h5M197.5 491.2v5" stroke="#fff" fill="none"/>
<path d="M373.2 512.6h5M375.7 510.1v5" stroke="#fff" fill="none"/>
<path d="M298.1 512.6h5M300.6 510.1v5" stroke="#fff" fill="none"/>
<path d="M137.0 512.6h5M139.5 510.1v5" stroke="#fff" fill="none"/>
<path d="M152.9 512.6h5M155.4 510.1v5" stroke="#fff" fill="none"/>
<path d="M376.1 529.5h5M378.6 527.0v5" stroke="#fff" fill="none"/>
<path d="M307.0 529.5h5M309.5 527.0v5" stroke="#fff" fill="none"/>
<path d="M101.0 529.5h5M103.5 527.0v5" stroke="#fff" fill="none"/>
<path d="M116.7 529.5h5M119.2 527.0v5" stroke="#fff" fill="none"/>
<path d="M379.7 545.5h5M382.2 543.0v5" stroke="#fff" fill="none"/>
<path d="M305.9 545.5h5M308.4 543.0v5" stroke="#fff" fill="none"/>
<path d="M83.0 545.5h5M85.5 543.0v5" stroke="#fff" fill="none"/>
<path d="M97.1 545.5h5M99.6 543.0v5" stroke="#fff" fill="none"/>
<path d="M384.9 560.0h5M387.4 557.5v5" stroke="#fff" fill="none"/>
<path d="M298.2 560.0h5M300.7 557.5v5" stroke="#fff" fill="none"/>
<path d="M71.0 560.0h5M73.5 557.5v5" stroke="#fff" fill="none"/>
<path d="M82.0 560.0h5M84.5 557.5v5" stroke="#fff" fill="none"/>
<path d="M390.0 574.4h5M392.5 571.9v5" stroke="#fff" fill="none"/>
<path d="M283.9 574.4h5M286.4 571.9v5" stroke="#fff" fill="none"/>
<path d="M71.0 574.4h5M73.5 571.9v5" stroke="#fff" fill="none"/>
<path d="M74.6 574.4h5M77.1 571.9v5" stroke="#fff" fill="none"/>
<path d="M396.1 586.4h5M398.6 583.9v5" stroke="#fff" fill="none"/>
<path d="M298.6 586.4h5M301.1 583.9v5" stroke="#fff" fill="none"/>
<path d="M71.0 586.4h5M73.5 583.9v5" stroke="#fff" fill="none"/>
<path d="M67.2 586.4h5M69.7 583.9v5" stroke="#fff" fill="none"/>
<path d="M402.1 598.5h5M404.6 596.0v5" stroke="#fff" fill="none"/>
<path d="M292.6 598.5h5M295.1 596.0v5" stroke="#fff" fill="none"/>
<path d="M71.0 598.5h5M73.5 596.0v5" stroke="#fff" fill="none"/>
<path d="M63.0 598.5h5M65.5 596.0v5" stroke="#fff" fill="none"/>
<path d="M406.1 610.6h5M408.6 608.1v5" stroke="#fff" fill="none"/>
<path d="M291.9 610.6h5M294.4 608.1v5" stroke="#fff" fill="none"/>
<path d="M77.0 610.6h5M79.5 608.1v5" stroke="#fff" fill="none"/>
<path d="M62.0 610.6h5M64.5 608.1v5" stroke="#fff" fill="none"/>
<path d="M411.1 620.4h5M413.6 617.9v5" stroke="#fff" fill="none"/>
<path d="M300.9 620.4h5M303.4 617.9v5" stroke="#fff" fill="none"/>
<path d="M83.0 620.4h5M85.5 617.9v5" stroke="#fff" fill="none"/>
<path d="M65.5 620.4h5M68.0 617.9v5" stroke="#fff" fill="none"/>
<path d="M417.1 630.6h5M419.6 628.1v5" stroke="#fff" fill="none"/>
<path d="M298.3 630.6h5M300.8 628.1v5" stroke="#fff" fill="none"/>
<path d="M83.0 630.6h5M85.5 628.1v5" stroke="#fff" fill="none"/>
<path d="M68.3 630.6h5M70.8 628.1v5" stroke="#fff" fill="none"/>
<path d="M419.0 640.7h5M421.5 638.2v5" stroke="#fff" fill="none"/>
<path d="M289.9 640.7h5M292.4 638.2v5" stroke="#fff" fill="none"/>
<path d="M83.0 640.7h5M85.5 638.2v5" stroke="#fff" fill="none"/>
<path d="M68.3 640.7h5M70.8 638.2v5" stroke="#fff" fill="none"/>
<path d="M426.1 648.5h5M428.6 646.0v5" stroke="#fff" fill="none"/>
<path d="M303.3 648.5h5M305.8 646.0v5" stroke="#fff" fill="none"/>
<path d="M83.0 648.5h5M85.5 646.0v5" stroke="#fff" fill="none"/>
<path d="M66.5 648.5h5M69.0 646.0v5" stroke="#fff" fill="none"/>
<path d="M425.7 657.7h5M428.2 655.2v5" stroke="#fff" fill="none"/>
<path d="M307.3 657.7h5M309.8 655.2v5" stroke="#fff" fill="none"/>
<path d="M77.0 657.7h5M79.5 655.2v5" stroke="#fff" fill="none"/>
<path d="M61.5 657.7h5M64.0 655.2v5" stroke="#fff" fill="none"/>
<path d="M432.0 665.6h5M434.5 663.1v5" stroke="#fff" fill="none"/>
<path d="M325.7 665.6h5M328.2 663.1v5" stroke="#fff" fill="none"/>
<path d="M77.0 665.6h5M79.5 663.1v5" stroke="#fff" fill="none"/>
<path d="M62.0 665.6h5M64.5 663.1v5" stroke="#fff" fill="none"/>
<path d="M435.0 669.4h5M437.5 666.9v5" stroke="#fff" fill="none"/>
<path d="M374.1 669.4h5M376.6 666.9v5" stroke="#fff" fill="none"/>
<path d="M77.0 669.4h5M79.5 666.9v5" stroke="#fff" fill="none"/>
<path d="M61.8 669.4h5M64.3 666.9v5" stroke="#fff" fill="none"/>
<path d="M436.8 683.5h5M439.3 681.0v5" stroke="#fff" fill="none"/>
<path d="M399.0 683.5h5M401.5 681.0v5" stroke="#fff" fill="none"/>
<path d="M77.0 683.5h5M79.5 681.0v5" stroke="#fff" fill="none"/>
<path d="M69.8 683.5h5M72.3 681.0v5" stroke="#fff" fill="none"/>
<path d="M447.5 694.5h5M450.0 692.0v5" stroke="#fff" fill="none"/>
<path d="M413.9 694.5h5M416.4 692.0v5" stroke="#fff" fill="none"/>
<path d="M71.0 694.5h5M73.5 692.0v5" stroke="#fff" fill="none"/>
<path d="M62.8 694.5h5M65.3 692.0v5" stroke="#fff" fill="none"/>
<path d="M460.1 706.4h5M462.6 703.9v5" stroke="#fff" fill="none"/>
<path d="M413.8 706.4h5M416.3 703.9v5" stroke="#fff" fill="none"/>
<path d="M71.0 706.4h5M73.5 703.9v5" stroke="#fff" fill="none"/>
<path d="M63.9 706.4h5M66.4 703.9v5" stroke="#fff" fill="none"/>
<path d="M470.7 713.4h5M473.2 710.9v5" stroke="#fff" fill="none"/>
<path d="M413.8 713.4h5M416.3 710.9v5" stroke="#fff" fill="none"/>
<path d="M71.0 713.4h5M73.5 710.9v5" stroke="#fff" fill="none"/>
<path d="M71.3 713.4h5M73.8 710.9v5" stroke="#fff" fill="none"/>
<path d="M480.1 719.6h5M482.6 717.1v5" stroke="#fff" fill="none"/>
<path d="M413.8 719.6h5M416.3 717.1v5" stroke="#fff" fill="none"/>
<path d="M71.0 719.6h5M73.5 717.1v5" stroke="#fff" fill="none"/>
<path d="M79.8 719.6h5M82.3 717.1v5" stroke="#fff" fill="none"/>
<path d="M487.0 727.7h5M489.5 725.2v5" stroke="#fff" fill="none"/>
<path d="M413.3 727.7h5M415.8 725.2v5" stroke="#fff" fill="none"/>
<path d="M77.0 727.7h5M79.5 725.2v5" stroke="#fff" fill="none"/>
<path d="M87.1 727.7h5M89.6 725.2v5" stroke="#fff" fill="none"/>
<path d="M490.1 731.6h5M492.6 729.1v5" stroke="#fff" fill="none"/>
<path d="M413.3 731.6h5M415.8 729.1v5" stroke="#fff" fill="none"/>
<path d="M83.0 731.6h5M85.5 729.1v5" stroke="#fff" fill="none"/>
<path d="M93.8 731.6h5M96.3 729.1v5" stroke="#fff" fill="none"/>
<path d="M122.1 706.5h5M124.6 704.0v5" stroke="#fff" fill="none"/>
<path d="M97.8 713.3h5M100.3 710.8v5" stroke="#fff" fill="none"/>
<path d="M80.1 719.6h5M82.6 717.1v5" stroke="#fff" fill="none"/>
<path d="M107.8 727.7h5M110.3 725.2v5" stroke="#fff" fill="none"/>
<path d="M118.1 731.6h5M120.6 729.1v5" stroke="#fff" fill="none"/>
<path d="M70.9 706.5h5M73.4 704.0v5" stroke="#fff" fill="none"/>
<path d="M80.9 713.3h5M83.4 710.8v5" stroke="#fff" fill="none"/>
<path d="M98.9 719.6h5M101.4 717.1v5" stroke="#fff" fill="none"/>
<path d="M100.8 727.7h5M103.3 725.2v5" stroke="#fff" fill="none"/>
<path d="M105.9 731.6h5M108.4 729.1v5" stroke="#fff" fill="none"/>
<path d="M208.0 657.2h5M210.5 654.7v5" stroke="#fff" fill="none"/>
<path d="M208.0 669.3h5M210.5 666.8v5" stroke="#fff" fill="none"/>
<path d="M209.0 694.7h5M211.5 692.2v5" stroke="#fff" fill="none"/>
<path d="M209.0 706.4h5M211.5 703.9v5" stroke="#fff" fill="none"/>
<path d="M209.0 712.6h5M211.5 710.1v5" stroke="#fff" fill="none"/>
<path d="M209.0 719.6h5M211.5 717.1v5" stroke="#fff" fill="none"/>
<path d="M209.0 727.4h5M211.5 724.9v5" stroke="#fff" fill="none"/>
<path d="M209.0 732.1h5M211.5 729.6v5" stroke="#fff" fill="none"/>
<path d="M145.5 51v4m1 0v8m1 0v8m1 0v8m1 0v8m1 0v8m1 0v8m1 0v8m1 0v8m1 0v8m1 0v8m1 0v8m1 0v5m1 0v2m1 0v3m1 0v2m1 0v2m1 0v3m1 0v2m1 0v3m1 0v2m1 0v2m1 0v3m1 0v2m1 0v3m1 0v2m1 0v2m1 0v3m1 0v2m1 0v3m1 0v2m1 0v2m1 0v3m1 0v2m1 0v3m1 0v2m1 0v2m1 0v3m1 0v2m1 0v3m1 0v2m1 0v2m1 0v2m1 0v2m1 0v1m1 0v1m1 0v2m1 0v1m1 0v1m1 0v2m1 0v1m1 0v1m1 0v2m1 0v1m1 0v1m1 0v2m1 0v1m1 0v1m1 0v2m1 0v1m1 0v1m1 0v2m1 0v1m1 0v1m1 0v2m1 0v1m1 0v1m1 0v2m1 0v1m1 0v1m1 0v2m1 0v1m1 0v1m1 0v2m1 0v1m1 0v1m1 0v2m1 0v1m1 0v1m1 0v2m1 0v1m1 0v1m1 0v2m1 0v1m1 0v1m1 0v2m1 0v2m1 0v2m1 0v2m1 0v2m1 0v2m1 0v2m1 0v2m1 0v2m1 0v2m1 0v2m1 0v2m1 0v2m1 0v2m1 0v2m1 0v2m1 0v2m1 0v2m1 0v2m1 0v2m1 0v2m1 0v2m1 0v2m1 0v2m1 0v2m1 0v2m1 0v2m1 0v2m1 0v2m1 0v3m1 0v2m1 0v2m1 0v2m1 0v2m1 0v2m1 0v3m1 0v2m1 0v2m1 0v2m1 0v2m1 0v2m1 0v37m-1 0v2m-1 0v3m-1 0v2m-1 0v2m-1 0v3m-1 0v2m-1 0v3m-1 0v2m-1 0v2m-1 0v3m-1 0v2m-1 0v3m-1 0v2m-1 0v2m-1 0v2m-1 0v2m-1 0v2m-1 0v3m-1 0v2m-1 0v2m-1 0v2m-1 0v2m-1 0v2m-1 0v2m-1 0v1m-1 0v1m-1 0v1m-1 0v1m-1 0v1m-1 0v1m-1 0v1m-1 0v1m-1 0v1m-1 0v1m-2.5 0.5h2m-2.5 0.5v1m-1 0v1m-1 0v1m-1 0v1m-1 0v1m-1 0v1m-1 0v1m-1 0v1m-1 0v1m-1 0v1m-1 0v1m-2.5 0.5h2m-4 1h2m-4 1h2m-4 1h2m-4 1h2m-4 1h2m-4 1h2m-4 1h2m-4 1h2m-4 1h2m-4 1h2m-4 1h2m-4 1h2m-4 1h2m-4 1h2m-4 1h2m-4 1h2m-4 1h2m-4 1h2m-4 1h2m-4 1h2m-4 1h2m-4 1h2m-4 1h2m-4 1h2m-4 1h2m-5 1h3m-5 1h2m-4 1h2m-4 1h2m-5 1h3m-5 1h2m-4 1h2m-4 1h2m-4 1h2m-5 1h3m-5 1h2m-4 1h2m-4 1h2m-4 1h2m-5 1h3m-5 1h2m-4 1h2m-4 1h2m-4 1h2m-4 1h2m-4 1h2m-4 1h2m-5 1h3m-5 1h2m-4 1h2m-4 1h2m-4 1h2m-4 1h2m-4 1h2m-4 1h2m-4 1h2m-4 1h2m-2.5 0.5v1m-1 0v1m-1 0v1m-2.5 0.5h2m-2.5 0.5v1m-1 0v1m-1 0v1m-1 0v1m-1 0v1m-1 0v1m-1 0v1m-2.5 0.5h2m-2.5 0.5v1m-1 0v1m-1 0v1m-1 0v1m-1 0v1m-1 0v2m-1 0v1m-1 0v1m-1 0v1m-1 0v2m-1 0v1m-1 0v1m-1 0v1m-1 0v2m-1 0v1m-1 0v40m1 0v2m1 0v2m1 0v2m1 0v2m1 0v2m1 0v1m1 0v2m1 0v2m1 0v1m1 0v2m1 0v2m1 0v29m-1 0v2m-1 0v1m-1 0v2m-1 0v1m-1 0v2m-1 0v27m-1 0v2m-1 0v2m-1 0v2m-1 0v2m-1 0v2m-1 0v26m1 0v2m1 0v1m1 0v1m1 0v2m1 0v1m1 0v1m0.5 0.5h2m0.5 0.5v1m0.5 0.5h2m0.5 0.5v1" stroke="#00ff00"/>
<path d="M161.5 51v4m1 0v8m1 0v8m1 0v8m1 0v8m1 0v8m1 0v8m1 0v8m1 0v8m1 0v8m1 0v8m1 0v8m1 0v5m1 0v2m1 0v3m1 0v2m1 0v2m1 0v3m1 0v2m1 0v3m1 0v2m1 0v2m1 0v3m1 0v2m1 0v3m1 0v2m1 0v2m1 0v3m1 0v2m1 0v3m1 0v2m1 0v2m1 0v3m1 0v2m1 0v3m1 0v2m1 0v2m1 0v3m1 0v2m1 0v3m1 0v2m1 0v2m1 0v2m1 0v2m1 0v1m1 0v1m1 0v2m1 0v1m1 0v1m1 0v2m1 0v1m1 0v1m1 0v2m1 0v1m1 0v1m1 0v2m1 0v1m1 0v1m1 0v2m1 0v1m1 0v1m1 0v2m1 0v1m1 0v1m1 0v2m1 0v1m1 0v1m1 0v2m1 0v1m1 0v1m1 0v2m1 0v1m1 0v1m1 0v2m1 0v1m1 0v1m1 0v2m1 0v1m1 0v1m1 0v2m1 0v1m1 0v1m1 0v2m1 0v1m1 0v1m1 0v2m1 0v2m1 0v2m1 0v2m1 0v2m1 0v2m1 0v2m1 0v2m1 0v2m1 0v2m1 0v2m1 0v2m1 0v2m1 0v2m1 0v2m1 0v2m1 0v2m1 0v2m1 0v2m1 0v2m1 0v2m1 0v2m1 0v2m1 0v2m1 0v2m1 0v2m1 0v2m1 0v2m1 0v2m1 0v3m1 0v2m1 0v2m1 0v2m1 0v2m1 0v2m1 0v3m1 0v2m1 0v2m1 0v2m1 0v2m1 0v2m1 0v37m-1 0v2m-1 0v3m-1 0v2m-1 0v2m-1 0v3m-1 0v2m-1 0v3m-1 0v2m-1 0v2m-1 0v3m-1 0v2m-1 0v3m-1 0v2m-1 0v2m-1 0v2m-1 0v2m-1 0v2m-1 0v3m-1 0v2m-1 0v2m-1 0v2m-1 0v2m-1 0v2m-1 0v2m-1 0v1m-1 0v1m-1 0v1m-1 0v1m-1 0v1m-1 0v1m-1 0v1m-1 0v1m-1 0v1m-1 0v1m-2.5 0.5h2m-2.5 0.5v1m-1 0v1m-1 0v1m-1 0v1m-1 0v1m-1 0v1m-1 0v1m-1 0v1m-1 0v1m-1 0v1m-1 0v1m-2.5 0.5h2m-4 1h2m-4 1h2m-4 1h2m-4 1h2m-4 1h2m-4 1h2m-4 1h2m-4 1h2m-4 1h2m-4 1h2m-4 1h2m-4 1h2m-4 1h2m-4 1h2m-4 1h2m-4 1h2m-4 1h2m-4 1h2m-4 1h2m-4 1h2m-4 1h2m-4 1h2m-4 1h2m-4 1h2m-4 1h2m-5 1h3m-5 1h2m-4 1h2m-4 1h2m-5 1h3m-5 1h2m-4 1h2m-4 1h2m-4 1h2m-5 1h3m-5 1h2m-4 1h2m-4 1h2m-4 1h2m-5 1h3m-5 1h2m-4 1h2m-4 1h2m-4 1h2m-4 1h2m-4 1h2m-4 1h2m-5 1h3m-5 1h2m-4 1h2m-4 1h2m-4 1h2m-4 1h2m-4 1h2m-4 1h2m-4 1h2m-4 1h2m-2.5 0.5v1m-2.5 0.5h2m-2.5 0.5v1m-1 0v1m-1 0v1m-2.5 0.5h2m-2.5 0.5v1m-1 0v1m-1 0v1m-2.5 0.5h2m-2.5 0.5v1m-1 0v1m-1 0v1m-2.5 0.5h2m-2.5 0.5v1m-1 0v1m-1 0v1m-1 0v1m-1 0v1m-1 0v1m-1 0v1m-1 0v1m-1 0v1m-1 0v1m-1 0v1m-1 0v1m-1 0v1m-1 0v1m-1 0v1m-1 0v1m-1 0v2m-1 0v2m-1 0v2m-1 0v2m-1 0v2m-1 0v2m-1 0v2m-1 0v1m-1 0v2m-1 0v1m-1 0v2m-1 0v1m-1 0v2m-1 0v1m-1 0v2m-1 0v2m-1 0v3m-1 0v3m-1 0v3m-1 0v8m-1 0v7m1 0v2m1 0v3m1 0v2m1 0v4m1 0v5m1 0v17m-1 0v4m-1 0v2m-1 0v2m-1 0v2m-1 0v2m-1 0v13m1 0v2m1 0v2m1 0v2m1 0v1m1 0v2m1 0v2m1 0v2m1 0v1m-1 0v2m-1 0v1m-1 0v2m-1 0v2m-1 0v1m-1 0v2m-1 0v7m1 0v6m1 0v1m1 0v1m1 0v1m1 0v1m1 0v1m1 0v1m1 0v1m0.5 0.5h2m0.5 0.5v1m0.5 0.5h2m0.5 0.5v1m0.5 0.5h2m0.5 0.5v1m1 0v1m1 0v1m1 0v2m1 0v1m1 0v1m1 0v1m1 0v1m0.5 0.5h2m0 1h2m0 1h2m0.5 0.5v1" stroke="#ff0080"/>
<path d="M547.5 51v1m-1 0v1m-1 0v1m-1 0v1m-1 0v1m-1 0v1m-1 0v1m-1 0v1m-1 0v2m-1 0v1m-1 0v1m-1 0v1m-1 0v1m-1 0v1m-1 0v1m-1 0v1m-1 0v1m-1 0v1m-1 0v1m-1 0v1m-1 0v1m-1 0v1m-1 0v1m-1 0v1m-1 0v1m-1 0v1m-1 0v2m-1 0v1m-1 0v1m-1 0v1m-1 0v1m-1 0v1m-1 0v1m-1 0v1m-1 0v1m-1 0v1m-1 0v1m-1 0v1m-1 0v1m-1 0v1m-1 0v1m-1 0v1m-1 0v1m-1 0v1m-1 0v2m-1 0v1m-1 0v1m-1 0v1m-1 0v1m-1 0v1m-1 0v1m-1 0v1m-1 0v1m-1 0v1m-1 0v1m-1 0v1m-1 0v1m-1 0v1m-1 0v1m-1 0v1m-1 0v1m-1 0v1m-1 0v1m-1 0v2m-1 0v1m-1 0v1m-1 0v1m-1 0v1m-1 0v1m-1 0v1m-1 0v1m-1 0v1m-1 0v1m-1 0v1m-1 0v1m-1 0v1m-1 0v1m-1 0v1m-1 0v1m-1 0v1m-1 0v1m-1 0v2m-1 0v1m-1 0v1m-1 0v1m-1 0v1m-1 0v1m-1 0v1m-1 0v1m-1 0v1m-1 0v1m-1 0v1m-1 0v1m-1 0v1m-1 0v1m-1 0v1m-1 0v1m-1 0v1m-1 0v1m-1 0v1m-1 0v1m-1 0v1m-1 0v1m-1 0v1m-1 0v1m-1 0v1m-1 0v1m-1 0v1m-1 0v1m-1 0v1m-1 0v1m-1 0v1m-1 0v1m-1 0v1m-1 0v1m-1 0v1m-1 0v1m-1 0v1m-1 0v1m-1 0v1m-1 0v1m-1 0v1m-1 0v1m-1 0v1m-1 0v1m-1 0v2m-1 0v1m-1 0v1m-1 0v1m-1 0v1m-1 0v1m-1 0v1m-1 0v1m-1 0v1m-1 0v1m-1 0v1m-1 0v1m-1 0v1m-1 0v1m-1 0v1m-1 0v1m-1 0v1m-1 0v1m-1 0v1m-1 0v1m-1 0v1m-1 0v1m-1 0v1m-1 0v1m-1 0v1m-1 0v1m-1 0v1m-1 0v1m-1 0v1m-1 0v1m-1 0v1m-1 0v1m-1 0v1m-1 0v1m-1 0v1m-1 0v1m-1 0v4m1 0v6m1 0v6m1 0v6m1 0v7m1 0v6m1 0v6m1 0v6m1 0v6m1 0v4m-1 0v2m-1 0v2m-1 0v2m-1 0v1m-1 0v2m-1 0v2m-1 0v2m-1 0v1m-1 0v2m-1 0v2m-1 0v2m-1 0v1m-1 0v2m-1 0v2m-1 0v1m-1 0v2m-1 0v2m-1 0v2m-1 0v1m-1 0v2m-1 0v2m-1 0v2m-1 0v1m-1 0v2m-1 0v2m-1 0v2m-1 0v2m-1 0v3m-1 0v4m-1 0v3m-1 0v3m-1 0v3m-1 0v4m-1 0v3m-1 0v3m-1 0v3m-1 0v4m-1 0v3m-1 0v2m-1 0v2m-1 0v1m-1 0v2m-1 0v1m-1 0v2m-1 0v2m-1 0v1m-1 0v2m-1 0v1m-1 0v2m-1 0v1m-1 0v2m-1 0v1m-1 0v2m-1 0v1m-1 0v2m-1 0v2m-1 0v1m-1 0v2m-1 0v1m-1 0v2m-1 0v3m-1 0v5m-1 0v5m-1 0v4m-1 0v5m-1 0v5m-1 0v4m-1 0v4m-1 0v4m-1 0v4m-1 0v3m-1 0v4m-1 0v4m-1 0v3m-1 0v2m-1 0v2m-1 0v3m-1 0v2m-1 0v2m-1 0v2m-1 0v3m-1 0v2m-1 0v2m-1 0v5m-1 0v7m-1 0v7m-1 0v5m-1 0v2m-1 0v2m-1 0v3m-1 0v2m-1 0v3m-1 0v2m-1 0v2m-1 0v2m1 0v2m1 0v2m1 0v2m1 0v2m1 0v2m1 0v2m1 0v2m1 0v2m1 0v9m-1 0v8m-1 0v2m-1 0v2m-1 0v2m-1 0v2m-1 0v2m-1 0v2m-1 0v2m-1 0v1m-1 0v1m-1 0v1m-1 0v1m-1 0v1m-1 0v1m-1 0v1m-1 0v1m-1 0v1m-1 0v1m-1 0v1m-1 0v1m-1 0v1m-1 0v1m-1 0v1m1 0v1m0.5 0.5h2m0.5 0.5v1m1 0v1m1 0v1m0.5 0.5h2m0.5 0.5v1m1 0v1m1 0v1m0.5 0.5h2m0.5 0.5v1m1 0v2m-1 0v2m-1 0v2m-1 0v2m-1 0v2m-1 0v2m-1 0v7m-1 0v6m1 0v1m1 0v1m1 0v1m1 0v2m1 0v1m1 0v1m1 0v1m1 0v1m1 0v2m-1 0v4m-1 0v3m-1 0v2m-1 0v1m-1 0v2m-1 0v1m-1 0v1m-1 0v1m-1 0v2m-1 0v1m-1 0v1m0.5 0.5h2m0 1h2m0.5 0.5v1m0.5 0.5h2m0.5 0.5v1m0.5 0.5h2m0 1h2m0.5 0.5v2m1 0v2m1 0v2m1 0v2m1 0v2m1 -1v1m0.5 0.5h2m0 1h2m0 1h3m0 1h2m0 1h3m0 1h2m0 1h2m0 1h8m0 1h12m0 1h12m0 1h12m0 1h6m0 1h2m0 1h2m0 1h2m0 1h2m0.5 0.5v1m0.5 0.5h2m0 1h2m0 1h2m0.5 0.5v1m0.5 0.5h2m0 1h2m0 1h2m0 1h2m0.5 0.5v1m0.5 0.5h2m0.5 0.5v1m1 0v1m0.5 0.5h2m0.5 0.5v1m1 0v1m0.5 0.5h2m0.5 0.5v1m1 0v1m0.5 0.5h2m0.5 0.5v30m-1 0v8" stroke="#00ffff"/>
<path d="M660.5 88v1m-1 0v1m-1 0v1m-1 0v1m-1 0v1m-1 0v1m-1 0v1m-1 0v1m-1 0v1m-1 0v2m-1 0v1m-1 0v1m-1 0v1m-1 0v1m-1 0v1m-1 0v1m-1 0v1m-1 0v1m-1 0v1m-1 0v1m-1 0v1m-1 0v1m-1 0v2m-1 0v1m-1 0v1m-1 0v1m-1 0v1m-1 0v1m-1 0v1m-1 0v1m-1 0v1m-1 0v1m-1 0v1m-1 0v1m-1 0v1m-1 0v2m-1 0v1m-1 0v1m-1 0v1m-1 0v1m-1 0v1m-1 0v1m-1 0v1m-1 0v1m-1 0v1m-1 0v1m-1 0v1m-1 0v1m-1 0v2m-1 0v1m-1 0v1m-1 0v1m-1 0v1m-1 0v1m-1 0v1m-1 0v1m-1 0v1m-1 0v1m-1 0v1m-1 0v1m-1 0v1m-1 0v1m-1 0v1m-1 0v1m-1 0v1m-1 0v1m-1 0v1m-1 0v1m-1 0v1m-1 0v1m-1 0v1m-1 0v1m-1 0v1m-1 0v1m-1 0v1m-1 0v1m-1 0v1m-1 0v1m-1 0v1m-1 0v1m-1 0v1m-1 0v1m-1 0v1m-1 0v1m-1 0v1m-1 0v1m-1 0v1m-1 0v1m-1 0v1m-1 0v1m-1 0v1m-1 0v1m-1 0v1m-1 0v1m-1 0v1m-1 0v1m-1 0v1m-1 0v1m-1 0v1m-1 0v1m-1 0v1m-1 0v1m-1 0v1m-1 0v1m-1 0v1m-1 0v1m-1 0v1m-1 0v1m-1 0v1m-1 0v1m-1 0v1m-1 0v1m-1 0v1m-1 0v1m-1 0v1m-1 0v1m-1 0v1m-1 0v1m-1 0v1m-1 0v1m-1 0v1m-1 0v1m-1 0v1m-1 0v1m-1 0v1m-1 0v1m-1 0v1m-1 0v1m-1 0v1m-2.5 0.5h2m-2.5 0.5v1m-1 0v1m-1 0v1m-1 0v1m-2.5 0.5h2m-2.5 0.5v1m-1 0v1m-1 0v1m-1 0v1m-2.5 0.5h2m-2.5 0.5v1m-1 0v1m-1 0v1m-1 0v1m-2.5 0.5h2m-2.5 0.5v1m-1 0v1m-1 0v1m-1 0v1m-2.5 0.5h2m-2.5 0.5v1m-1 0v1m-1 0v1m-1 0v1m-2.5 0.5h2m-2.5 0.5v1m-1 0v1m-1 0v1m-1 0v1m-2.5 0.5h2m-2.5 0.5v1m-1 0v1m-1 0v1m-1 0v1m-2.5 0.5h2m-2.5 0.5v1m-1 0v1m-1 0v1m-1 0v1m-2.5 0.5h2m-2.5 0.5v1m-1 0v1m-1 0v1m-1 0v1m-2.5 0.5h2m-2.5 0.5v1m-1 0v1m-1 0v1m-1 0v1m-2.5 0.5h2m-2.5 0.5v1m-1 0v1m-1 0v1m-1 0v1m-1 0v1m-1 0v1m-2.5 0.5h2m-2.5 0.5v1m-1 0v1m-1 0v1m-1 0v1m-1 0v1m-1 0v1m-1 0v1m-2.5 0.5h2m-2.5 0.5v1m-1 0v1m-1 0v1m-1 0v1m-1 0v1m-1 0v1m-1 0v1m-2.5 0.5h2m-2.5 0.5v1m-1 0v1m-1 0v1m-1 0v1m-1 0v1m-1 0v1m-2.5 0.5h2m-2.5 0.5v1m-1 0v1m-1 0v1m-1 0v1m-1 0v1m-1 0v1m-1 0v1m-2.5 0.5h2m-2.5 0.5v1m-1 0v1m-1 0v1m-1 0v1m-1 0v1m-1 0v1m-1 0v1m-2.5 0.5h2m-2.5 0.5v1m-1 0v1m-1 0v1m-1 0v1m-1 0v2m-1 0v1m-1 0v1m-1 0v2m-1 0v1m-1 0v2m-1 0v1m-1 0v1m-1 0v2m-1 0v1m-1 0v2m-1 0v1m-1 0v1m-1 0v2m-1 0v1m-1 0v1m-1 0v2m-1 0v1m-1 0v2m-1 0v1m-1 0v1m-1 0v2m-1 0v1m-1 0v2m-1 0v1m-1 0v1m-1 0v2m-1 0v2m-1 0v2m-1 0v3m-1 0v3m-1 0v2m-1 0v3m-1 0v3m-1 0v2m-1 0v3m-1 0v2m-1 0v3m-1 0v3m-1 0v2m-1 0v6m-1 0v10m-1 0v10m-1 0v18m-1 0v18m1 0v12m1 0v11m1 0v10m1 0v10m1 0v10m1 0v7m1 0v6m1 0v6m1 0v5m1 0v4m1 0v4m1 0v4m1 0v3m1 0v3m1 0v3m1 0v3m1 0v3m1 0v3m1 0v3m1 0v3m1 0v2m1 0v3m1 0v3m1 0v2m1 0v2m1 0v2m1 0v2m1 0v2m1 0v2m1 0v2m1 0v2m1 0v2m1 0v2m1 0v2m1 0v2m1 0v3m1 0v3m1 0v3m1 0v3m1 0v2m1 0v2m1 0v2m1 0v2m1 0v1m1 0v2m1 0v2m1 0v1m1 0v2m1 0v2m1 0v3m1 0v5m1 0v3m1 0v1m1 0v1m1 0v2m1 0v1m1 0v1m1 0v1m1 0v10m1 0v2m1 0v1m1 0v1m1 0v2m1 0v1m1 0v1m1 0v2m1 0v1m1 0v4m1 0v7m1 0v4m1 0v1m1 0v1m1 0v1m1 0v1m1 0v1m1 0v1m1 0v1m1 0v1m1 0v1m1 0v1m1 0v1m1 0v1m1 0v1m1 0v1m1 0v1m1 0v1m1 0v1m1 0v1m1 0v1m1 0v1m1 0v1m1 0v1m1 0v1m0.5 0.5h2m0.5 0.5v1m0.5 0.5h2m0 1h2m0.5 0.5v1m0.5 0.5h2m0.5 0.5v1m0.5 0.5h2m0.5 0.5v1m0.5 0.5h2m0.5 0.5v1m0.5 0.5h2m0.5 0.5v1m1 0v1m1 0v1m1 0v2m1 0v1m1 0v1m1 0v1m1 0v1m1 0v2m1 0v1m1 0v1" stroke="#ff0000"/>
<path d="M62 695.5h3m0 1h6m0 1h6m0 1h5m0 1h6m0 1h6m0 1h5m0 1h6m0 1h5m0 1h6m0 1h6m0 1h3m-6 1h4m-7 1h3m-7 1h4m-7 1h3m-6 1h3m-7 1h4m-7 1h3m-6 1h3m-6 1h3m-6 1h3m-6 1h3m-6 1h3m-5 1h2m0 1h4m0 1h3m0 1h4m0 1h3m0 1h4m0 1h3m0 1h4m0 1h3m0 1h2m0 1h3m0 1h2m0 1h2" stroke="#e07000"/>
<path d="M62.5 695v1m1 0v1m1 0v1m1 0v1m1 0v1m1 0v1m1 0v1m1 0v1m1 0v1m1 0v1m1 0v1m1 0v1m0.5 0.5h2m0.5 0.5v1m0.5 0.5h2m0.5 0.5v1m1 0v1m0.5 0.5h2m0 1h2m0 1h3m0 1h3m0 1h3m0 1h3m0 1h3m0 1h2m-0.5 0.5v2m1 0v4m1 0v2m1 0v1m0.5 0.5h2m0.5 0.5v1m1 0v1" stroke="#ffff00"/>
</g>
<line x1="210.5" y1="652.0" x2="210.5" y2="689.5" stroke="#c8c800" stroke-width="1" />
<line x1="211.5" y1="689.5" x2="211.5" y2="732.5" stroke="#c8c800" stroke-width="1" />
<rect x="207" y="649" width="7" height="7" fill="#c8c800"/>
<text x="210.5" y="655.5" font-size="8" fill="#000" text-anchor="middle" font-weight="bold" >3</text>
<rect x="207" y="678" width="7" height="7" fill="#c8c800"/>
<text x="210.5" y="684.5" font-size="8" fill="#000" text-anchor="middle" font-weight="bold" >2</text>
<rect x="208" y="703" width="7" height="7" fill="#c8c800"/>
<text x="211.5" y="709.5" font-size="8" fill="#000" text-anchor="middle" font-weight="bold" >1</text>
<rect x="67.5" y="607.5" width="43" height="17" fill="#000" stroke="#ffff00"/>
<text transform="translate(71.5 621.5) scale(0.9 1)" font-size="14.5" fill="#ffff00" text-anchor="start" font-weight="normal" >CAPE</text>
<rect x="67.5" y="636.5" width="57" height="17" fill="#000" stroke="#e07000"/>
<text transform="translate(71.5 650.5) scale(0.9 1)" font-size="14.5" fill="#e07000" text-anchor="start" font-weight="normal" >CINH * 5</text>
<rect x="625.5" y="679.5" width="30" height="17" fill="#000" stroke="#ff00ff"/>
<text transform="translate(629.5 693.5) scale(0.9 1)" font-size="14.5" fill="#ff00ff" text-anchor="start" font-weight="normal" >LCL</text>
<line x1="761.5" y1="40.0" x2="761.5" y2="770.0" stroke="#00ff00" stroke-width="1" />
<line x1="826.5" y1="40.0" x2="826.5" y2="770.0" stroke="#ff0080" stroke-width="1" />
<text transform="translate(761.0 32.0) scale(0.9 1)" font-size="14" fill="#00ff00" text-anchor="middle" font-weight="bold" font-family="DejaVu Sans, Verdana, sans-serif">OBS</text>
<text transform="translate(826.5 32.0) scale(0.9 1)" font-size="14" fill="#ff0080" text-anchor="middle" font-weight="bold" font-family="DejaVu Sans, Verdana, sans-serif">SR</text>
<line x1="761.5" y1="146.8" x2="742.1" y2="123.9" stroke="#fff" stroke-width="1" />
<line x1="826.5" y1="146.8" x2="807.1" y2="125.0" stroke="#fff" stroke-width="1" />
<line x1="761.5" y1="218.7" x2="742.1" y2="196.0" stroke="#fff" stroke-width="1" />
<line x1="826.5" y1="218.7" x2="807.1" y2="197.1" stroke="#fff" stroke-width="1" />
<line x1="761.5" y1="274.6" x2="738.9" y2="255.3" stroke="#fff" stroke-width="1" />
<line x1="826.5" y1="274.6" x2="804.0" y2="255.0" stroke="#fff" stroke-width="1" />
<line x1="761.5" y1="320.8" x2="738.9" y2="302.5" stroke="#fff" stroke-width="1" />
<line x1="826.5" y1="320.8" x2="804.0" y2="302.5" stroke="#fff" stroke-width="1" />
<line x1="761.5" y1="360.7" x2="740.3" y2="341.0" stroke="#fff" stroke-width="1" />
<line x1="826.5" y1="360.7" x2="805.0" y2="341.0" stroke="#fff" stroke-width="1" />
<line x1="761.5" y1="394.8" x2="740.3" y2="374.2" stroke="#fff" stroke-width="1" />
<line x1="826.5" y1="394.8" x2="805.0" y2="374.2" stroke="#fff" stroke-width="1" />
<line x1="761.5" y1="423.9" x2="742.0" y2="402.4" stroke="#fff" stroke-width="1" />
<line x1="826.5" y1="423.9" x2="807.0" y2="402.4" stroke="#fff" stroke-width="1" />
<line x1="761.5" y1="449.6" x2="742.0" y2="428.0" stroke="#fff" stroke-width="1" />
<line x1="826.5" y1="449.6" x2="807.0" y2="428.0" stroke="#fff" stroke-width="1" />
<line x1="761.5" y1="472.6" x2="742.0" y2="450.0" stroke="#fff" stroke-width="1" />
<line x1="826.5" y1="472.6" x2="807.0" y2="451.0" stroke="#fff" stroke-width="1" />
<line x1="761.5" y1="493.7" x2="743.0" y2="471.0" stroke="#fff" stroke-width="1" />
<line x1="826.5" y1="493.7" x2="808.0" y2="471.0" stroke="#fff" stroke-width="1" />
<line x1="761.5" y1="512.3" x2="745.4" y2="489.0" stroke="#fff" stroke-width="1" />
<line x1="826.5" y1="512.3" x2="809.0" y2="489.0" stroke="#fff" stroke-width="1" />
<line x1="761.5" y1="529.5" x2="748.2" y2="503.1" stroke="#fff" stroke-width="1" />
<line x1="826.5" y1="529.5" x2="811.1" y2="505.3" stroke="#fff" stroke-width="1" />
<line x1="761.5" y1="545.3" x2="756.0" y2="516.8" stroke="#fff" stroke-width="1" />
<line x1="826.5" y1="545.3" x2="813.2" y2="519.2" stroke="#fff" stroke-width="1" />
<line x1="761.5" y1="559.6" x2="773.7" y2="533.0" stroke="#fff" stroke-width="1" />
<line x1="826.5" y1="559.6" x2="817.3" y2="532.3" stroke="#fff" stroke-width="1" />
<line x1="761.5" y1="574.6" x2="788.9" y2="562.3" stroke="#fff" stroke-width="1" />
<line x1="826.5" y1="574.6" x2="824.2" y2="545.2" stroke="#fff" stroke-width="1" />
<line x1="761.5" y1="586.4" x2="789.7" y2="594.2" stroke="#fff" stroke-width="1" />
<line x1="826.5" y1="586.4" x2="825.2" y2="556.3" stroke="#fff" stroke-width="1" />
<line x1="761.5" y1="598.7" x2="785.7" y2="613.6" stroke="#fff" stroke-width="1" />
<line x1="826.5" y1="598.7" x2="816.3" y2="571.3" stroke="#fff" stroke-width="1" />
<line x1="761.5" y1="610.6" x2="784.8" y2="627.6" stroke="#fff" stroke-width="1" />
<line x1="826.5" y1="610.6" x2="855.0" y2="603.2" stroke="#fff" stroke-width="1" />
<line x1="761.5" y1="620.6" x2="785.5" y2="636.7" stroke="#fff" stroke-width="1" />
<line x1="826.5" y1="620.6" x2="854.8" y2="628.6" stroke="#fff" stroke-width="1" />
<line x1="761.5" y1="630.6" x2="786.8" y2="643.7" stroke="#fff" stroke-width="1" />
<line x1="826.5" y1="630.6" x2="855.8" y2="630.6" stroke="#fff" stroke-width="1" />
<line x1="761.5" y1="640.5" x2="787.9" y2="653.6" stroke="#fff" stroke-width="1" />
<line x1="826.5" y1="640.5" x2="855.8" y2="637.4" stroke="#fff" stroke-width="1" />
<line x1="761.5" y1="648.6" x2="786.8" y2="662.6" stroke="#fff" stroke-width="1" />
<line x1="826.5" y1="648.6" x2="855.8" y2="651.6" stroke="#fff" stroke-width="1" />
<line x1="761.5" y1="657.7" x2="784.9" y2="674.4" stroke="#fff" stroke-width="1" />
<line x1="826.5" y1="657.7" x2="856.0" y2="656.3" stroke="#fff" stroke-width="1" />
<line x1="761.5" y1="665.4" x2="773.3" y2="679.6" stroke="#fff" stroke-width="1" />
<line x1="826.5" y1="665.4" x2="824.7" y2="684.5" stroke="#fff" stroke-width="1" />
<line x1="761.5" y1="669.4" x2="782.9" y2="689.5" stroke="#fff" stroke-width="1" />
<line x1="826.5" y1="669.4" x2="843.8" y2="692.6" stroke="#fff" stroke-width="1" />
<line x1="761.5" y1="683.3" x2="765.5" y2="709.0" stroke="#fff" stroke-width="1" />
<line x1="826.5" y1="683.3" x2="803.2" y2="700.6" stroke="#fff" stroke-width="1" />
<line x1="761.5" y1="695.0" x2="783.8" y2="713.6" stroke="#fff" stroke-width="1" />
<line x1="826.5" y1="695.0" x2="808.2" y2="673.2" stroke="#fff" stroke-width="1" />
<line x1="761.5" y1="706.6" x2="785.6" y2="722.6" stroke="#fff" stroke-width="1" />
<line x1="826.5" y1="706.6" x2="818.9" y2="687.2" stroke="#fff" stroke-width="1" />
<line x1="761.5" y1="713.5" x2="791.0" y2="712.3" stroke="#fff" stroke-width="1" />
<line x1="826.5" y1="713.5" x2="820.7" y2="692.6" stroke="#fff" stroke-width="1" />
<line x1="761.5" y1="720.8" x2="782.9" y2="700.2" stroke="#fff" stroke-width="1" />
<line x1="826.5" y1="720.8" x2="820.2" y2="698.8" stroke="#fff" stroke-width="1" />
<line x1="761.5" y1="728.4" x2="772.4" y2="700.2" stroke="#fff" stroke-width="1" />
<line x1="826.5" y1="728.4" x2="822.5" y2="701.5" stroke="#fff" stroke-width="1" />
<line x1="761.5" y1="731.5" x2="771.0" y2="701.5" stroke="#fff" stroke-width="1" />
<line x1="826.5" y1="731.5" x2="822.5" y2="703.0" stroke="#fff" stroke-width="1" />
</g>
<text x="61.0" y="29.0" font-size="16" fill="#fff" text-anchor="start" font-weight="bold"  textLength="105.5">Station: Bern</text>
<text x="190.8" y="29.0" font-size="16" fill="#fff" text-anchor="start" font-weight="bold"  textLength="128.5">Date: 08.05.2008</text>
<text x="340.5" y="29.0" font-size="16" fill="#fff" text-anchor="start" font-weight="bold"  textLength="92.8">Time: 1130Z</text>
<text transform="translate(53.0 55.0) scale(0.9 1)" font-size="14" fill="#fff" text-anchor="end" font-weight="normal" >100</text>
<text transform="translate(53.0 326.0) scale(0.9 1)" font-size="14" fill="#fff" text-anchor="end" font-weight="normal" >200</text>
<text transform="translate(53.0 454.0) scale(0.9 1)" font-size="14" fill="#fff" text-anchor="end" font-weight="normal" >300</text>
<text transform="translate(53.0 534.0) scale(0.9 1)" font-size="14" fill="#fff" text-anchor="end" font-weight="normal" >400</text>
<text transform="translate(53.0 591.0) scale(0.9 1)" font-size="14" fill="#fff" text-anchor="end" font-weight="normal" >500</text>
<text transform="translate(53.0 635.0) scale(0.9 1)" font-size="14" fill="#fff" text-anchor="end" font-weight="normal" >600</text>
<text transform="translate(53.0 670.0) scale(0.9 1)" font-size="14" fill="#fff" text-anchor="end" font-weight="normal" >700</text>
<text transform="translate(53.0 699.0) scale(0.9 1)" font-size="14" fill="#fff" text-anchor="end" font-weight="normal" >800</text>
<text transform="translate(53.0 724.0) scale(0.9 1)" font-size="14" fill="#fff" text-anchor="end" font-weight="normal" >900</text>
<text transform="translate(53.0 745.0) scale(0.9 1)" font-size="14" fill="#fff" text-anchor="end" font-weight="normal" >1000</text>
<text transform="translate(670.0 50.0) scale(0.9 1)" font-size="14" fill="#fff" text-anchor="start" font-weight="normal" >16195m</text>
<text transform="translate(670.0 321.0) scale(0.9 1)" font-size="14" fill="#fff" text-anchor="start" font-weight="normal" >11852m</text>
<text transform="translate(670.0 449.0) scale(0.9 1)" font-size="14" fill="#fff" text-anchor="start" font-weight="normal" >9270m</text>
<text transform="translate(670.0 529.0) scale(0.9 1)" font-size="14" fill="#fff" text-anchor="start" font-weight="normal" >7305m</text>
<text transform="translate(670.0 586.0) scale(0.9 1)" font-size="14" fill="#fff" text-anchor="start" font-weight="normal" >5690m</text>
<text transform="translate(670.0 630.0) scale(0.9 1)" font-size="14" fill="#fff" text-anchor="start" font-weight="normal" >4307m</text>
<text transform="translate(670.0 665.0) scale(0.9 1)" font-size="14" fill="#fff" text-anchor="start" font-weight="normal" >3095m</text>
<text transform="translate(670.0 694.0) scale(0.9 1)" font-size="14" fill="#fff" text-anchor="start" font-weight="normal" >2043m</text>
<text transform="translate(670.0 719.0) scale(0.9 1)" font-size="14" fill="#fff" text-anchor="start" font-weight="normal" >1057m</text>
<text transform="translate(58.4 768.0) scale(0.9 1)" font-size="14" fill="#fff" text-anchor="middle" font-weight="normal" >-50</text>
<text transform="translate(118.4 768.0) scale(0.9 1)" font-size="14" fill="#fff" text-anchor="middle" font-weight="normal" >-40</text>
<text transform="translate(178.4 768.0) scale(0.9 1)" font-size="14" fill="#fff" text-anchor="middle" font-weight="normal" >-30</text>
<text transform="translate(238.4 768.0) scale(0.9 1)" font-size="14" fill="#fff" text-anchor="middle" font-weight="normal" >-20</text>
<text transform="translate(298.4 768.0) scale(0.9 1)" font-size="14" fill="#fff" text-anchor="middle" font-weight="normal" >-10</text>
<text transform="translate(361.1 768.0) scale(0.9 1)" font-size="14" fill="#fff" text-anchor="middle" font-weight="normal" >0</text>
<text transform="translate(421.1 768.0) scale(0.9 1)" font-size="14" fill="#fff" text-anchor="middle" font-weight="normal" >10</text>
<text transform="translate(481.1 768.0) scale(0.9 1)" font-size="14" fill="#fff" text-anchor="middle" font-weight="normal" >20</text>
<text transform="translate(541.1 768.0) scale(0.9 1)" font-size="14" fill="#fff" text-anchor="middle" font-weight="normal" >30</text>
<text transform="translate(601.1 768.0) scale(0.9 1)" font-size="14" fill="#fff" text-anchor="middle" font-weight="normal" >40</text>
<text transform="translate(661.1 768.0) scale(0.9 1)" font-size="14" fill="#fff" text-anchor="middle" font-weight="normal" >50</text>
<text transform="translate(275.2 781.0) scale(0.9 1)" font-size="14" fill="#fff" text-anchor="start" font-weight="normal"  textLength="191.7">Temperature, Dewpoint  [ °C ]</text>
<line x1="61.5" y1="788.0" x2="61.5" y2="793.0" stroke="#fff" stroke-width="1" />
<text transform="translate(61.1 806.0) scale(0.9 1)" font-size="14" fill="#fff" text-anchor="middle" font-weight="normal" >0</text>
<line x1="121.5" y1="788.0" x2="121.5" y2="793.0" stroke="#fff" stroke-width="1" />
<text transform="translate(121.1 806.0) scale(0.9 1)" font-size="14" fill="#fff" text-anchor="middle" font-weight="normal" >10</text>
<line x1="181.5" y1="788.0" x2="181.5" y2="793.0" stroke="#fff" stroke-width="1" />
<text transform="translate(181.1 806.0) scale(0.9 1)" font-size="14" fill="#fff" text-anchor="middle" font-weight="normal" >20</text>
<line x1="241.5" y1="788.0" x2="241.5" y2="793.0" stroke="#fff" stroke-width="1" />
<text transform="translate(241.1 806.0) scale(0.9 1)" font-size="14" fill="#fff" text-anchor="middle" font-weight="normal" >30</text>
<line x1="301.5" y1="788.0" x2="301.5" y2="793.0" stroke="#fff" stroke-width="1" />
<text transform="translate(301.1 806.0) scale(0.9 1)" font-size="14" fill="#fff" text-anchor="middle" font-weight="normal" >40</text>
<line x1="361.5" y1="788.0" x2="361.5" y2="793.0" stroke="#fff" stroke-width="1" />
<text transform="translate(361.1 806.0) scale(0.9 1)" font-size="14" fill="#fff" text-anchor="middle" font-weight="normal" >50</text>
<line x1="421.5" y1="788.0" x2="421.5" y2="793.0" stroke="#fff" stroke-width="1" />
<text transform="translate(421.1 806.0) scale(0.9 1)" font-size="14" fill="#fff" text-anchor="middle" font-weight="normal" >60</text>
<line x1="481.5" y1="788.0" x2="481.5" y2="793.0" stroke="#fff" stroke-width="1" />
<text transform="translate(481.1 806.0) scale(0.9 1)" font-size="14" fill="#fff" text-anchor="middle" font-weight="normal" >70</text>
<line x1="541.5" y1="788.0" x2="541.5" y2="793.0" stroke="#fff" stroke-width="1" />
<text transform="translate(541.1 806.0) scale(0.9 1)" font-size="14" fill="#fff" text-anchor="middle" font-weight="normal" >80</text>
<line x1="601.5" y1="788.0" x2="601.5" y2="793.0" stroke="#fff" stroke-width="1" />
<text transform="translate(601.1 806.0) scale(0.9 1)" font-size="14" fill="#fff" text-anchor="middle" font-weight="normal" >90</text>
<line x1="661.5" y1="788.0" x2="661.5" y2="793.0" stroke="#fff" stroke-width="1" />
<text transform="translate(661.1 806.0) scale(0.9 1)" font-size="14" fill="#fff" text-anchor="middle" font-weight="normal" >100</text>
<text transform="translate(306.8 819.0) scale(0.9 1)" font-size="14" fill="#fff" text-anchor="start" font-weight="normal"  textLength="119.4">Windspeed  [ knt ]</text>
<line x1="61.5" y1="826.0" x2="61.5" y2="831.0" stroke="#fff" stroke-width="1" />
<text transform="translate(61.1 843.0) scale(0.9 1)" font-size="14" fill="#fff" text-anchor="middle" font-weight="normal" >0</text>
<line x1="121.5" y1="826.0" x2="121.5" y2="831.0" stroke="#fff" stroke-width="1" />
<text transform="translate(121.1 843.0) scale(0.9 1)" font-size="14" fill="#fff" text-anchor="middle" font-weight="normal" >300</text>
<line x1="181.5" y1="826.0" x2="181.5" y2="831.0" stroke="#fff" stroke-width="1" />
<text transform="translate(181.1 843.0) scale(0.9 1)" font-size="14" fill="#fff" text-anchor="middle" font-weight="normal" >600</text>
<line x1="241.5" y1="826.0" x2="241.5" y2="831.0" stroke="#fff" stroke-width="1" />
<text transform="translate(241.1 843.0) scale(0.9 1)" font-size="14" fill="#fff" text-anchor="middle" font-weight="normal" >900</text>
<line x1="301.5" y1="826.0" x2="301.5" y2="831.0" stroke="#fff" stroke-width="1" />
<text transform="translate(301.1 843.0) scale(0.9 1)" font-size="14" fill="#fff" text-anchor="middle" font-weight="normal" >1200</text>
<line x1="361.5" y1="826.0" x2="361.5" y2="831.0" stroke="#fff" stroke-width="1" />
<text transform="translate(361.1 843.0) scale(0.9 1)" font-size="14" fill="#fff" text-anchor="middle" font-weight="normal" >1500</text>
<line x1="421.5" y1="826.0" x2="421.5" y2="831.0" stroke="#fff" stroke-width="1" />
<text transform="translate(421.1 843.0) scale(0.9 1)" font-size="14" fill="#fff" text-anchor="middle" font-weight="normal" >1800</text>
<line x1="481.5" y1="826.0" x2="481.5" y2="831.0" stroke="#fff" stroke-width="1" />
<text transform="translate(481.1 843.0) scale(0.9 1)" font-size="14" fill="#fff" text-anchor="middle" font-weight="normal" >2100</text>
<line x1="541.5" y1="826.0" x2="541.5" y2="831.0" stroke="#fff" stroke-width="1" />
<text transform="translate(541.1 843.0) scale(0.9 1)" font-size="14" fill="#fff" text-anchor="middle" font-weight="normal" >2400</text>
<line x1="601.5" y1="826.0" x2="601.5" y2="831.0" stroke="#fff" stroke-width="1" />
<text transform="translate(601.1 843.0) scale(0.9 1)" font-size="14" fill="#fff" text-anchor="middle" font-weight="normal" >2700</text>
<line x1="661.5" y1="826.0" x2="661.5" y2="831.0" stroke="#fff" stroke-width="1" />
<text transform="translate(661.1 843.0) scale(0.9 1)" font-size="14" fill="#fff" text-anchor="middle" font-weight="normal" >3000</text>
<text transform="translate(292.0 857.0) scale(0.9 1)" font-size="14" fill="#fff" text-anchor="start" font-weight="normal"  textLength="153.9">CAPE, CINH * 5  [ J/kg ]</text>
<line x1="61.5" y1="863.0" x2="61.5" y2="868.0" stroke="#fff" stroke-width="1" />
<text transform="translate(58.4 880.0) scale(0.9 1)" font-size="14" fill="#fff" text-anchor="middle" font-weight="normal" >-100</text>
<line x1="136.5" y1="863.0" x2="136.5" y2="868.0" stroke="#fff" stroke-width="1" />
<text transform="translate(133.4 880.0) scale(0.9 1)" font-size="14" fill="#fff" text-anchor="middle" font-weight="normal" >-50</text>
<line x1="211.5" y1="863.0" x2="211.5" y2="868.0" stroke="#fff" stroke-width="1" />
<text transform="translate(211.1 880.0) scale(0.9 1)" font-size="14" fill="#fff" text-anchor="middle" font-weight="normal" >0</text>
<line x1="286.5" y1="863.0" x2="286.5" y2="868.0" stroke="#fff" stroke-width="1" />
<text transform="translate(286.1 880.0) scale(0.9 1)" font-size="14" fill="#fff" text-anchor="middle" font-weight="normal" >50</text>
<line x1="361.5" y1="863.0" x2="361.5" y2="868.0" stroke="#fff" stroke-width="1" />
<text transform="translate(361.1 880.0) scale(0.9 1)" font-size="14" fill="#fff" text-anchor="middle" font-weight="normal" >100</text>
<line x1="436.5" y1="863.0" x2="436.5" y2="868.0" stroke="#fff" stroke-width="1" />
<text transform="translate(436.1 880.0) scale(0.9 1)" font-size="14" fill="#fff" text-anchor="middle" font-weight="normal" >150</text>
<line x1="511.5" y1="863.0" x2="511.5" y2="868.0" stroke="#fff" stroke-width="1" />
<text transform="translate(511.1 880.0) scale(0.9 1)" font-size="14" fill="#fff" text-anchor="middle" font-weight="normal" >200</text>
<line x1="586.5" y1="863.0" x2="586.5" y2="868.0" stroke="#fff" stroke-width="1" />
<text transform="translate(586.1 880.0) scale(0.9 1)" font-size="14" fill="#fff" text-anchor="middle" font-weight="normal" >250</text>
<line x1="661.5" y1="863.0" x2="661.5" y2="868.0" stroke="#fff" stroke-width="1" />
<text transform="translate(661.1 880.0) scale(0.9 1)" font-size="14" fill="#fff" text-anchor="middle" font-weight="normal" >300</text>
<text transform="translate(258.8 893.0) scale(0.9 1)" font-size="14" fill="#fff" text-anchor="start" font-weight="normal"  textLength="228.1">Storm Relative Helicity  [ m^2/s^2 ]</text>
<text transform="translate(894.0 40.0) scale(0.9 1)" font-size="14" fill="#fff" text-anchor="start" font-weight="normal" text-decoration="underline">Parameter</text>
<text transform="translate(1124.0 40.0) scale(0.9 1)" font-size="14" fill="#fff" text-anchor="end" font-weight="normal" text-decoration="underline" textLength="67.8">Value LCL</text>
<text transform="translate(1214.0 40.0) scale(0.9 1)" font-size="14" fill="#fff" text-anchor="end" font-weight="normal" text-decoration="underline" textLength="70.6">Value CCL</text>
<text transform="translate(1230.0 40.0) scale(0.9 1)" font-size="14" fill="#fff" text-anchor="start" font-weight="normal" text-decoration="underline">Unit</text>
<text transform="translate(894.0 62.0) scale(0.9 1)" font-size="14" fill="#fff" text-anchor="start" font-weight="normal"  textLength="156.1">Convective Temperature:</text>
<text transform="translate(1124.0 62.0) scale(0.9 1)" font-size="14" fill="#ffff00" text-anchor="end" font-weight="normal" >22.16</text>
<text transform="translate(1230.0 62.0) scale(0.9 1)" font-size="14" fill="#fff" text-anchor="start" font-weight="normal"  textLength="25.2">[°C]</text>
<text transform="translate(894.0 79.0) scale(0.9 1)" font-size="14" fill="#fff" text-anchor="start" font-weight="normal"  textLength="103.1">Snowfall Height:</text>
<text transform="translate(1124.0 79.0) scale(0.9 1)" font-size="14" fill="#ffffff" text-anchor="end" font-weight="normal" >2525.25</text>
<text transform="translate(1230.0 79.0) scale(0.9 1)" font-size="14" fill="#fff" text-anchor="start" font-weight="normal"  textLength="20.9">[m]</text>
<text transform="translate(894.0 104.0) scale(0.9 1)" font-size="14" fill="#fff" text-anchor="start" font-weight="normal" text-decoration="underline" textLength="288.6">Parcels: Using 50mB mean layer LCL + CCL</text>
<text transform="translate(894.0 124.0) scale(0.9 1)" font-size="14" fill="#fff" text-anchor="start" font-weight="normal"  textLength="77.4">Lifted Index:</text>
<text transform="translate(1124.0 124.0) scale(0.9 1)" font-size="14" fill="#ff0000" text-anchor="end" font-weight="normal" >-1.48</text>
<text transform="translate(1214.0 124.0) scale(0.9 1)" font-size="14" fill="#ff0000" text-anchor="end" font-weight="normal" >-2.42</text>
<text transform="translate(1230.0 124.0) scale(0.9 1)" font-size="14" fill="#fff" text-anchor="start" font-weight="normal"  textLength="25.2">[°C]</text>
<text transform="translate(894.0 141.0) scale(0.9 1)" font-size="14" fill="#fff" text-anchor="start" font-weight="normal"  textLength="43.9">CAPE:</text>
<text transform="translate(1124.0 141.0) scale(0.9 1)" font-size="14" fill="#ff0000" text-anchor="end" font-weight="normal" >208.79</text>
<text transform="translate(1214.0 141.0) scale(0.9 1)" font-size="14" fill="#ffff00" text-anchor="end" font-weight="normal" >412.58</text>
<text transform="translate(1230.0 141.0) scale(0.9 1)" font-size="14" fill="#fff" text-anchor="start" font-weight="normal"  textLength="35.6">[J/kg]</text>
<text transform="translate(894.0 158.0) scale(0.9 1)" font-size="14" fill="#fff" text-anchor="start" font-weight="normal" >CINH:</text>
<text transform="translate(1124.0 158.0) scale(0.9 1)" font-size="14" fill="#ff0000" text-anchor="end" font-weight="normal" >41.59</text>
<text transform="translate(1230.0 158.0) scale(0.9 1)" font-size="14" fill="#fff" text-anchor="start" font-weight="normal"  textLength="35.6">[J/kg]</text>
<text transform="translate(894.0 175.0) scale(0.9 1)" font-size="14" fill="#fff" text-anchor="start" font-weight="normal" >CAPE Virt.:</text>
<text transform="translate(1124.0 175.0) scale(0.9 1)" font-size="14" fill="#ff0000" text-anchor="end" font-weight="normal" >262.99</text>
<text transform="translate(1214.0 175.0) scale(0.9 1)" font-size="14" fill="#ffff00" text-anchor="end" font-weight="normal" >397.65</text>
<text transform="translate(1230.0 175.0) scale(0.9 1)" font-size="14" fill="#fff" text-anchor="start" font-weight="normal"  textLength="35.6">[J/kg]</text>
<text transform="translate(894.0 192.0) scale(0.9 1)" font-size="14" fill="#fff" text-anchor="start" font-weight="normal" >CINH Virt.:</text>
<text transform="translate(1124.0 192.0) scale(0.9 1)" font-size="14" fill="#ff0000" text-anchor="end" font-weight="normal" >22.68</text>
<text transform="translate(1230.0 192.0) scale(0.9 1)" font-size="14" fill="#fff" text-anchor="start" font-weight="normal"  textLength="35.6">[J/kg]</text>
<text transform="translate(894.0 209.0) scale(0.9 1)" font-size="14" fill="#fff" text-anchor="start" font-weight="normal"  textLength="157.7">DCAPE (LFS = 500mB):</text>
<text transform="translate(1124.0 209.0) scale(0.9 1)" font-size="14" fill="#ff0000" text-anchor="end" font-weight="normal" >744.26</text>
<text transform="translate(1230.0 209.0) scale(0.9 1)" font-size="14" fill="#fff" text-anchor="start" font-weight="normal"  textLength="35.6">[J/kg]</text>
<text transform="translate(894.0 226.0) scale(0.9 1)" font-size="14" fill="#fff" text-anchor="start" font-weight="normal"  textLength="132.8">850-600 Lapse Rate:</text>
<text transform="translate(1124.0 226.0) scale(0.9 1)" font-size="14" fill="#ff0000" text-anchor="end" font-weight="normal" >20.37</text>
<text transform="translate(1230.0 226.0) scale(0.9 1)" font-size="14" fill="#fff" text-anchor="start" font-weight="normal"  textLength="25.2">[°C]</text>
<text transform="translate(894.0 243.0) scale(0.9 1)" font-size="14" fill="#fff" text-anchor="start" font-weight="normal"  textLength="162.8">Fawbush-Miller Hail Size:</text>
<text transform="translate(1124.0 243.0) scale(0.9 1)" font-size="14" fill="#00ff00" text-anchor="end" font-weight="normal" >&lt;= 0.6</text>
<text transform="translate(1230.0 243.0) scale(0.9 1)" font-size="14" fill="#fff" text-anchor="start" font-weight="normal"  textLength="29.2">[cm]</text>
<text transform="translate(894.0 260.0) scale(0.9 1)" font-size="14" fill="#fff" text-anchor="start" font-weight="normal"  textLength="156.1">Sig. Hail Param. (SHIP):</text>
<text transform="translate(1124.0 260.0) scale(0.9 1)" font-size="14" fill="#00ff00" text-anchor="end" font-weight="normal" >0.01</text>
<text transform="translate(1230.0 260.0) scale(0.9 1)" font-size="14" fill="#fff" text-anchor="start" font-weight="normal"  textLength="16.6">[1]</text>
<text transform="translate(894.0 277.0) scale(0.9 1)" font-size="14" fill="#fff" text-anchor="start" font-weight="normal"  textLength="207.6">Max. Hail Size (new, new2, old):</text>
<text transform="translate(1124.0 277.0) scale(0.9 1)" font-size="14" fill="#ffff00" text-anchor="end" font-weight="normal" >2.79</text>
<text transform="translate(1230.0 277.0) scale(0.9 1)" font-size="14" fill="#fff" text-anchor="start" font-weight="normal"  textLength="29.2">[cm]</text>
<text transform="translate(1124.5 277.0) scale(0.9 1)" font-size="14" fill="#fff" text-anchor="start" font-weight="normal" >,</text>
<text transform="translate(1135.0 277.0) scale(0.9 1)" font-size="14" fill="#ffff00" text-anchor="start" font-weight="normal" >2.52</text>
<text transform="translate(1161.0 277.0) scale(0.9 1)" font-size="14" fill="#fff" text-anchor="start" font-weight="normal" >,</text>
<text transform="translate(1172.0 277.0) scale(0.9 1)" font-size="14" fill="#00ff00" text-anchor="start" font-weight="normal" >0.50</text>
<text transform="translate(894.0 297.0) scale(0.9 1)" font-size="14" fill="#fff" text-anchor="start" font-weight="normal"  textLength="112.7">LCL / CCL (AGL):</text>
<text transform="translate(1124.0 297.0) scale(0.9 1)" font-size="14" fill="#ffff00" text-anchor="end" font-weight="normal" >1721.12</text>
<text transform="translate(1214.0 297.0) scale(0.9 1)" font-size="14" fill="#ffff00" text-anchor="end" font-weight="normal" >1901.35</text>
<text transform="translate(1230.0 297.0) scale(0.9 1)" font-size="14" fill="#fff" text-anchor="start" font-weight="normal"  textLength="20.9">[m]</text>
<text transform="translate(894.0 314.0) scale(0.9 1)" font-size="14" fill="#fff" text-anchor="start" font-weight="normal"  textLength="117.0">Convective Height:</text>
<text transform="translate(1124.0 314.0) scale(0.9 1)" font-size="14" fill="#ffff00" text-anchor="end" font-weight="normal" >6.03</text>
<text transform="translate(1214.0 314.0) scale(0.9 1)" font-size="14" fill="#ffff00" text-anchor="end" font-weight="normal" >6.50</text>
<text transform="translate(1230.0 314.0) scale(0.9 1)" font-size="14" fill="#fff" text-anchor="start" font-weight="normal"  textLength="29.2">[km]</text>
<text transform="translate(894.0 339.0) scale(0.9 1)" font-size="14" fill="#fff" text-anchor="start" font-weight="normal" text-decoration="underline" textLength="118.1">Convective Indices</text>
<text transform="translate(894.0 359.0) scale(0.9 1)" font-size="14" fill="#fff" text-anchor="start" font-weight="normal"  textLength="105.9">Showalter Index:</text>
<text transform="translate(1124.0 359.0) scale(0.9 1)" font-size="14" fill="#ff0000" text-anchor="end" font-weight="normal" >-0.60</text>
<text transform="translate(1230.0 359.0) scale(0.9 1)" font-size="14" fill="#fff" text-anchor="start" font-weight="normal"  textLength="25.2">[°C]</text>
<text transform="translate(894.0 376.0) scale(0.9 1)" font-size="14" fill="#fff" text-anchor="start" font-weight="normal"  textLength="167.2">Modified Thompson Index:</text>
<text transform="translate(1124.0 376.0) scale(0.9 1)" font-size="14" fill="#00ff00" text-anchor="end" font-weight="normal" >25.48</text>
<text transform="translate(1230.0 376.0) scale(0.9 1)" font-size="14" fill="#fff" text-anchor="start" font-weight="normal"  textLength="25.2">[°C]</text>
<text transform="translate(894.0 393.0) scale(0.9 1)" font-size="14" fill="#fff" text-anchor="start" font-weight="normal"  textLength="117.0">Total Totals Index:</text>
<text transform="translate(1124.0 393.0) scale(0.9 1)" font-size="14" fill="#ff0000" text-anchor="end" font-weight="normal" >54.18</text>
<text transform="translate(1230.0 393.0) scale(0.9 1)" font-size="14" fill="#fff" text-anchor="start" font-weight="normal"  textLength="25.2">[°C]</text>
<text transform="translate(894.0 410.0) scale(0.9 1)" font-size="14" fill="#fff" text-anchor="start" font-weight="normal"  textLength="64.0">KO Index:</text>
<text transform="translate(1124.0 410.0) scale(0.9 1)" font-size="14" fill="#ff0000" text-anchor="end" font-weight="normal" >-13.69</text>
<text transform="translate(1230.0 410.0) scale(0.9 1)" font-size="14" fill="#fff" text-anchor="start" font-weight="normal"  textLength="16.6">[1]</text>
<text transform="translate(894.0 427.0) scale(0.9 1)" font-size="14" fill="#fff" text-anchor="start" font-weight="normal"  textLength="137.1">Craven SigSvr / 1000:</text>
<text transform="translate(1124.0 427.0) scale(0.9 1)" font-size="14" fill="#00ff00" text-anchor="end" font-weight="normal" >0.18</text>
<text transform="translate(1230.0 427.0) scale(0.9 1)" font-size="14" fill="#fff" text-anchor="start" font-weight="normal"  textLength="59.7">[m^3/s^3]</text>
<text transform="translate(894.0 444.0) scale(0.9 1)" font-size="14" fill="#fff" text-anchor="start" font-weight="normal"  textLength="126.9">SCP RM (new, old):</text>
<text transform="translate(1124.0 444.0) scale(0.9 1)" font-size="14" fill="#00ff00" text-anchor="end" font-weight="normal" >0.00</text>
<text transform="translate(1230.0 444.0) scale(0.9 1)" font-size="14" fill="#fff" text-anchor="start" font-weight="normal"  textLength="16.6">[1]</text>
<text transform="translate(1124.5 444.0) scale(0.9 1)" font-size="14" fill="#fff" text-anchor="start" font-weight="normal" >,</text>
<text transform="translate(1135.0 444.0) scale(0.9 1)" font-size="14" fill="#00ff00" text-anchor="start" font-weight="normal" >0.00</text>
<text transform="translate(894.0 461.0) scale(0.9 1)" font-size="14" fill="#fff" text-anchor="start" font-weight="normal"  textLength="124.9">SCP LM (new, old):</text>
<text transform="translate(1124.0 461.0) scale(0.9 1)" font-size="14" fill="#00ff00" text-anchor="end" font-weight="normal" >0.00</text>
<text transform="translate(1230.0 461.0) scale(0.9 1)" font-size="14" fill="#fff" text-anchor="start" font-weight="normal"  textLength="16.6">[1]</text>
<text transform="translate(1124.5 461.0) scale(0.9 1)" font-size="14" fill="#fff" text-anchor="start" font-weight="normal" >,</text>
<text transform="translate(1135.0 461.0) scale(0.9 1)" font-size="14" fill="#00ff00" text-anchor="start" font-weight="normal" >0.00</text>
<text transform="translate(894.0 478.0) scale(0.9 1)" font-size="14" fill="#fff" text-anchor="start" font-weight="normal"  textLength="98.8">STP (new, old):</text>
<text transform="translate(1124.0 478.0) scale(0.9 1)" font-size="14" fill="#00ff00" text-anchor="end" font-weight="normal" >0.00</text>
<text transform="translate(1230.0 478.0) scale(0.9 1)" font-size="14" fill="#fff" text-anchor="start" font-weight="normal"  textLength="16.6">[1]</text>
<text transform="translate(1124.5 478.0) scale(0.9 1)" font-size="14" fill="#fff" text-anchor="start" font-weight="normal" >,</text>
<text transform="translate(1135.0 478.0) scale(0.9 1)" font-size="14" fill="#00ff00" text-anchor="start" font-weight="normal" >0.00</text>
<text transform="translate(894.0 495.0) scale(0.9 1)" font-size="14" fill="#fff" text-anchor="start" font-weight="normal"  textLength="83.8">SB STP (fix):</text>
<text transform="translate(1124.0 495.0) scale(0.9 1)" font-size="14" fill="#00ff00" text-anchor="end" font-weight="normal" >0.00</text>
<text transform="translate(1230.0 495.0) scale(0.9 1)" font-size="14" fill="#fff" text-anchor="start" font-weight="normal"  textLength="16.6">[1]</text>
<text transform="translate(894.0 512.0) scale(0.9 1)" font-size="14" fill="#fff" text-anchor="start" font-weight="normal"  textLength="146.2">Derecho Comp Param:</text>
<text transform="translate(1124.0 512.0) scale(0.9 1)" font-size="14" fill="#00ff00" text-anchor="end" font-weight="normal" >0.00</text>
<text transform="translate(1230.0 512.0) scale(0.9 1)" font-size="14" fill="#fff" text-anchor="start" font-weight="normal"  textLength="16.6">[1]</text>
<text transform="translate(894.0 529.0) scale(0.9 1)" font-size="14" fill="#fff" text-anchor="start" font-weight="normal"  textLength="169.6">MCS 18m/s (MMP, MSP):</text>
<text transform="translate(1124.0 529.0) scale(0.9 1)" font-size="14" fill="#00ff00" text-anchor="end" font-weight="normal" >25.46</text>
<text transform="translate(1230.0 529.0) scale(0.9 1)" font-size="14" fill="#fff" text-anchor="start" font-weight="normal"  textLength="22.1">[%]</text>
<text transform="translate(1124.5 529.0) scale(0.9 1)" font-size="14" fill="#fff" text-anchor="start" font-weight="normal" >,</text>
<text transform="translate(1135.0 529.0) scale(0.9 1)" font-size="14" fill="#ffffff" text-anchor="start" font-weight="normal" >---</text>
<text transform="translate(894.0 546.0) scale(0.9 1)" font-size="14" fill="#fff" text-anchor="start" font-weight="normal"  textLength="161.7">Exp. Supercell Index CH:</text>
<text transform="translate(1124.0 546.0) scale(0.9 1)" font-size="14" fill="#00ff00" text-anchor="end" font-weight="normal" >0.16</text>
<text transform="translate(1230.0 546.0) scale(0.9 1)" font-size="14" fill="#fff" text-anchor="start" font-weight="normal"  textLength="16.6">[1]</text>
<text transform="translate(894.0 563.0) scale(0.9 1)" font-size="14" fill="#fff" text-anchor="start" font-weight="normal"  textLength="110.7">SWISS 12 Index:</text>
<text transform="translate(1124.0 563.0) scale(0.9 1)" font-size="14" fill="#00ff00" text-anchor="end" font-weight="normal" >2.67</text>
<text transform="translate(1230.0 563.0) scale(0.9 1)" font-size="14" fill="#fff" text-anchor="start" font-weight="normal"  textLength="16.6">[1]</text>
<text transform="translate(894.0 588.0) scale(0.9 1)" font-size="14" fill="#fff" text-anchor="start" font-weight="normal" text-decoration="underline" textLength="112.7">Wind Parameters</text>
<text transform="translate(894.0 608.0) scale(0.9 1)" font-size="14" fill="#fff" text-anchor="start" font-weight="normal"  textLength="103.9">Storm Direction:</text>
<text transform="translate(1124.0 608.0) scale(0.9 1)" font-size="14" fill="#ffffff" text-anchor="end" font-weight="normal" >133.04</text>
<text transform="translate(1230.0 608.0) scale(0.9 1)" font-size="14" fill="#fff" text-anchor="start" font-weight="normal"  textLength="14.6">[°]</text>
<text transform="translate(894.0 625.0) scale(0.9 1)" font-size="14" fill="#fff" text-anchor="start" font-weight="normal"  textLength="90.9">Storm Motion:</text>
<text transform="translate(1124.0 625.0) scale(0.9 1)" font-size="14" fill="#00ff00" text-anchor="end" font-weight="normal" >2.73</text>
<text transform="translate(1230.0 625.0) scale(0.9 1)" font-size="14" fill="#fff" text-anchor="start" font-weight="normal"  textLength="29.2">[knt]</text>
<text transform="translate(894.0 645.0) scale(0.9 1)" font-size="14" fill="#fff" text-anchor="start" font-weight="normal"  textLength="120.1">SR Wind Sfc-2km:</text>
<text transform="translate(1124.0 645.0) scale(0.9 1)" font-size="14" fill="#00ff00" text-anchor="end" font-weight="normal" >1.83</text>
<text transform="translate(1230.0 645.0) scale(0.9 1)" font-size="14" fill="#fff" text-anchor="start" font-weight="normal"  textLength="29.2">[knt]</text>
<text transform="translate(894.0 662.0) scale(0.9 1)" font-size="14" fill="#fff" text-anchor="start" font-weight="normal"  textLength="126.4">SR Wind 4km-6km:</text>
<text transform="translate(1124.0 662.0) scale(0.9 1)" font-size="14" fill="#00ff00" text-anchor="end" font-weight="normal" >1.33</text>
<text transform="translate(1230.0 662.0) scale(0.9 1)" font-size="14" fill="#fff" text-anchor="start" font-weight="normal"  textLength="29.2">[knt]</text>
<text transform="translate(894.0 679.0) scale(0.9 1)" font-size="14" fill="#fff" text-anchor="start" font-weight="normal"  textLength="134.3">SR Wind 9km-11km:</text>
<text transform="translate(1124.0 679.0) scale(0.9 1)" font-size="14" fill="#00ff00" text-anchor="end" font-weight="normal" >36.77</text>
<text transform="translate(1230.0 679.0) scale(0.9 1)" font-size="14" fill="#fff" text-anchor="start" font-weight="normal"  textLength="53.3">[knt] HP</text>
<text transform="translate(894.0 699.0) scale(0.9 1)" font-size="14" fill="#fff" text-anchor="start" font-weight="normal"  textLength="135.6">Effective Shear 6000:</text>
<text transform="translate(1124.0 699.0) scale(0.9 1)" font-size="14" fill="#00ff00" text-anchor="end" font-weight="normal" >1.65</text>
<text transform="translate(1230.0 699.0) scale(0.9 1)" font-size="14" fill="#fff" text-anchor="start" font-weight="normal"  textLength="29.2">[knt]</text>
<text transform="translate(894.0 719.0) scale(0.9 1)" font-size="14" fill="#fff" text-anchor="start" font-weight="normal"  textLength="164.4">Bulk Richardson Number:</text>
<text transform="translate(1124.0 719.0) scale(0.9 1)" font-size="14" fill="#ffff00" text-anchor="end" font-weight="normal" >136.32</text>
<text transform="translate(1214.0 719.0) scale(0.9 1)" font-size="14" fill="#ffff00" text-anchor="end" font-weight="normal" >269.38</text>
<text transform="translate(1230.0 719.0) scale(0.9 1)" font-size="14" fill="#fff" text-anchor="start" font-weight="normal"  textLength="16.6">[1]</text>
<text transform="translate(894.0 739.0) scale(0.9 1)" font-size="14" fill="#fff" text-anchor="start" font-weight="normal"  textLength="124.1">3km Effective SRH:</text>
<text transform="translate(1124.0 739.0) scale(0.9 1)" font-size="14" fill="#00ff00" text-anchor="end" font-weight="normal" >-0.56</text>
<text transform="translate(1230.0 739.0) scale(0.9 1)" font-size="14" fill="#fff" text-anchor="start" font-weight="normal"  textLength="60.4">[m^2/s^2]</text>
<text transform="translate(894.0 756.0) scale(0.9 1)" font-size="14" fill="#fff" text-anchor="start" font-weight="normal"  textLength="165.6">Max 3km SRH (Sfc-2km):</text>
<text transform="translate(1124.0 756.0) scale(0.9 1)" font-size="14" fill="#00ff00" text-anchor="end" font-weight="normal" >-4.02</text>
<text transform="translate(1230.0 756.0) scale(0.9 1)" font-size="14" fill="#fff" text-anchor="start" font-weight="normal"  textLength="60.4">[m^2/s^2]</text>
<text transform="translate(894.0 773.0) scale(0.9 1)" font-size="14" fill="#fff" text-anchor="start" font-weight="normal"  textLength="168.3">Max 3km SRH Level AGL:</text>
<text transform="translate(1124.0 773.0) scale(0.9 1)" font-size="14" fill="#00ff00" text-anchor="end" font-weight="normal" >1939.00</text>
<text transform="translate(1230.0 773.0) scale(0.9 1)" font-size="14" fill="#fff" text-anchor="start" font-weight="normal"  textLength="20.9">[m]</text>
<text transform="translate(894.0 793.0) scale(0.9 1)" font-size="14" fill="#fff" text-anchor="start" font-weight="normal"  textLength="172.7">3km Energy Helicity Index:</text>
<text transform="translate(1124.0 793.0) scale(0.9 1)" font-size="14" fill="#00ff00" text-anchor="end" font-weight="normal" >0.00</text>
<text transform="translate(1214.0 793.0) scale(0.9 1)" font-size="14" fill="#00ff00" text-anchor="end" font-weight="normal" >0.00</text>
<text transform="translate(1230.0 793.0) scale(0.9 1)" font-size="14" fill="#fff" text-anchor="start" font-weight="normal"  textLength="16.6">[1]</text>
<text transform="translate(894.0 810.0) scale(0.9 1)" font-size="14" fill="#fff" text-anchor="start" font-weight="normal"  textLength="156.1">3km Vorticity Gen. Pot.:</text>
<text transform="translate(1124.0 810.0) scale(0.9 1)" font-size="14" fill="#00ff00" text-anchor="end" font-weight="normal" >0.02</text>
<text transform="translate(1214.0 810.0) scale(0.9 1)" font-size="14" fill="#00ff00" text-anchor="end" font-weight="normal" >0.02</text>
<text transform="translate(1230.0 810.0) scale(0.9 1)" font-size="14" fill="#fff" text-anchor="start" font-weight="normal"  textLength="46.6">[m/s^2]</text>
<rect x="729" y="827" width="15" height="8" fill="#ff0000"/>
<text transform="translate(753.0 836.0) scale(0.9 1)" font-size="14" fill="#ff0000" text-anchor="start" font-weight="normal"  textLength="124.7">Temperature Profile</text>
<rect x="729" y="847" width="15" height="8" fill="#00ffff"/>
<text transform="translate(753.0 856.0) scale(0.9 1)" font-size="14" fill="#00ffff" text-anchor="start" font-weight="normal"  textLength="103.7">Dewpoint Profile</text>
<rect x="729" y="867" width="15" height="8" fill="#00ff00"/>
<text transform="translate(753.0 876.0) scale(0.9 1)" font-size="14" fill="#00ff00" text-anchor="start" font-weight="normal"  textLength="152.4">OBS Windspeed Profile</text>
<rect x="729" y="887" width="15" height="8" fill="#ff0080"/>
<text transform="translate(753.0 896.0) scale(0.9 1)" font-size="14" fill="#ff0080" text-anchor="start" font-weight="normal"  textLength="141.2">SR Windspeed Profile</text>
<rect x="729" y="907" width="15" height="8" fill="#c8c800"/>
<text transform="translate(753.0 916.0) scale(0.9 1)" font-size="14" fill="#c8c800" text-anchor="start" font-weight="normal"  textLength="247.9">Sfc-3km Storm Relative Helicity Profile</text>
<rect x="729" y="927" width="15" height="8" fill="#404000"/>
<text transform="translate(753.0 936.0) scale(0.9 1)" font-size="14" fill="#404000" text-anchor="start" font-weight="normal"  textLength="228.1">Effective Layer (CAPE &gt;= 100 J/kg)</text>
<rect x="1079" y="827" width="15" height="8" fill="#00ff00"/>
<text transform="translate(1103.0 836.0) scale(0.9 1)" font-size="14" fill="#00ff00" text-anchor="start" font-weight="normal"  textLength="204.2">No / Non Severe Thunderstorms</text>
<rect x="1079" y="847" width="15" height="8" fill="#ffff00"/>
<text transform="translate(1103.0 856.0) scale(0.9 1)" font-size="14" fill="#ffff00" text-anchor="start" font-weight="normal"  textLength="235.8">Scattered / Moderate Thunderstorms</text>
<rect x="1079" y="867" width="15" height="8" fill="#ff0000"/>
<text transform="translate(1103.0 876.0) scale(0.9 1)" font-size="14" fill="#ff0000" text-anchor="start" font-weight="normal"  textLength="233.4">Widespread / Severe Thunderstorms</text>
</svg></body></html>
